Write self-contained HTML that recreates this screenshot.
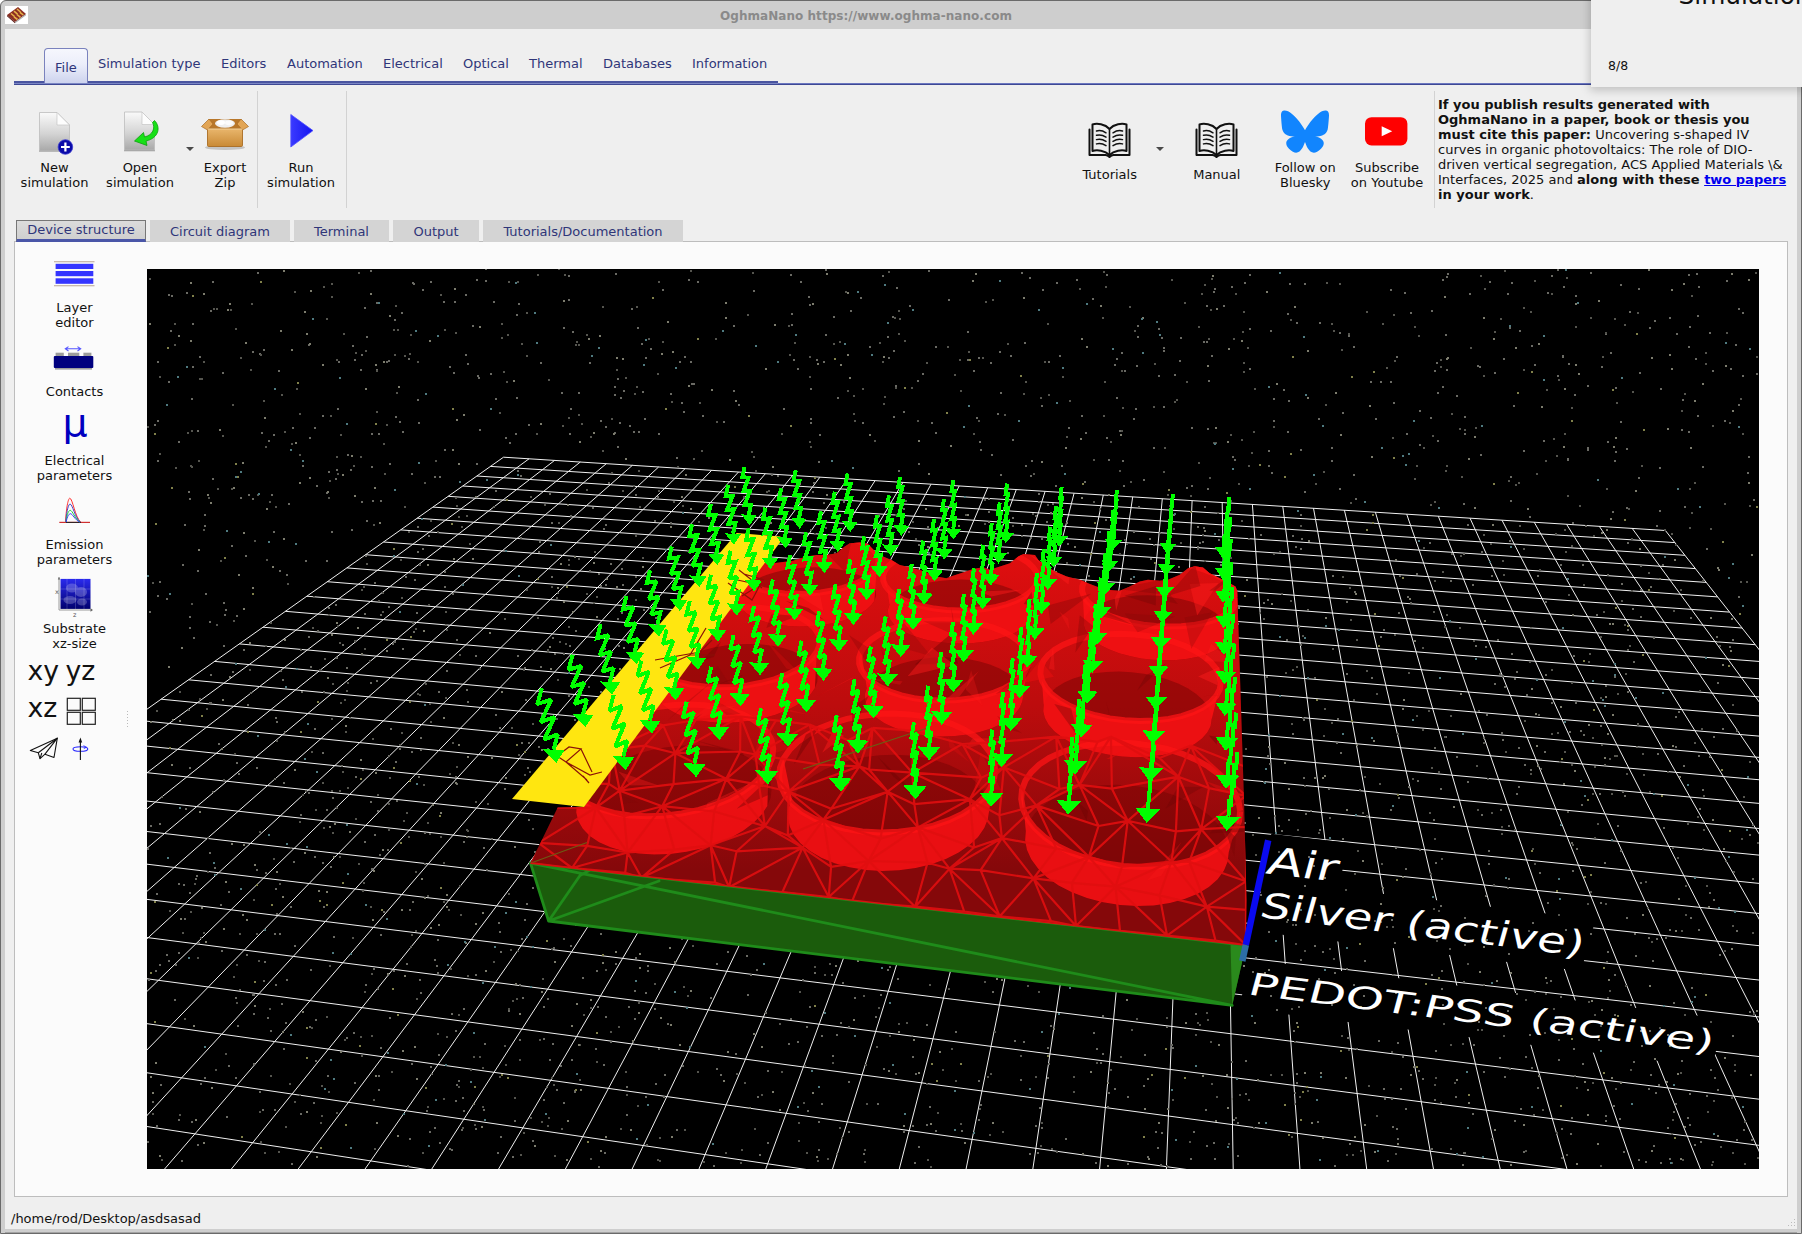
<!DOCTYPE html><html><head><meta charset="utf-8"><title>OghmaNano</title><style>
*{box-sizing:border-box;margin:0;padding:0}
html,body{width:1802px;height:1234px;overflow:hidden;background:#fff}
body{font-family:"DejaVu Sans","Liberation Sans",sans-serif;font-size:13px;color:#111;position:relative}
.abs{position:absolute}
#win{position:absolute;left:0;top:0;width:1802px;height:1234px;background:#cecece;border:1px solid #6a6a6a;border-radius:6px 6px 0 0}
#content{position:absolute;left:5px;top:29px;width:1792px;height:1200px;background:#efefef}
#title{position:absolute;left:0;top:2px;width:1732px;height:28px;line-height:28px;text-align:center;font-weight:bold;font-size:12px;color:#8a8a8a;letter-spacing:.05px}
.t{position:absolute;white-space:nowrap;line-height:15px}
.c{position:absolute;white-space:nowrap;line-height:15px;text-align:center;transform:translateX(-50%)}
.rt{position:absolute;top:56px;color:#2f3679;white-space:nowrap;line-height:15px}
.tab2{position:absolute;top:220px;height:22px;background:#d4d4d4;color:#2f3679;text-align:center;line-height:23px;white-space:nowrap}
.sep{position:absolute;width:1px;background:#d2d2d2}
</style></head><body>
<div id="win"></div>
<div id="content"></div>
<div id="title">OghmaNano https://www.oghma-nano.com</div>
<svg class="abs" style="left:5px;top:6px" width="23" height="18" viewBox="0 0 23 18"><rect width="23" height="18" fill="#fff"/><polygon points="2,9 13,1 21,8 10,16" fill="#8c2f22"/><polygon points="2,9 10,16 10,17.2 2,10.2" fill="#5a1a14"/><polygon points="10,16 21,8 21,9.2 10,17.2" fill="#a8a8a8"/><g stroke="#e7b24a" stroke-width="1.6"><path d="M6,7.5 9.5,10.5M9,5.2 12.5,8.2M12,3 15.5,6M9,10.8 12.5,13.5M12,8.5 15.5,11.3M15,6.3 18.3,9"/></g></svg>
<div class="abs" style="left:14px;top:81px;width:764px;height:2px;background:#4a55a0"></div>
<div class="abs" style="left:14px;top:83px;width:764px;height:1px;background:#7a86c4"></div>
<div class="abs" style="left:778px;top:83px;width:1019px;height:1px;background:#6b77c0"></div>
<div class="abs" style="left:14px;top:84px;width:1783px;height:1px;background:#3e4894"></div>
<div class="abs" style="left:5px;top:1232px;width:1792px;height:1px;background:#a3a3a3"></div>
<div class="abs" style="left:44px;top:48px;width:44px;height:35px;border:1px solid #7a82bd;border-bottom:none;border-radius:4px 4px 0 0;background:linear-gradient(#f6f7fd 0%,#eceefa 45%,#cdd3ee 100%)"></div>
<div class="rt" style="left:55px;top:60px">File</div>
<div class="rt" style="left:98px">Simulation type</div>
<div class="rt" style="left:221px">Editors</div>
<div class="rt" style="left:287px">Automation</div>
<div class="rt" style="left:383px">Electrical</div>
<div class="rt" style="left:463px">Optical</div>
<div class="rt" style="left:529px">Thermal</div>
<div class="rt" style="left:603px">Databases</div>
<div class="rt" style="left:692px">Information</div>
<div class="sep" style="left:257px;top:91px;height:117px"></div>
<div class="sep" style="left:346px;top:91px;height:117px"></div>
<div class="sep" style="left:1434px;top:91px;height:117px"></div>
<div class="c" style="left:54.5px;top:160px">New<br>simulation</div>
<div class="c" style="left:140px;top:160px">Open<br>simulation</div>
<div class="c" style="left:225px;top:160px">Export<br>Zip</div>
<div class="c" style="left:301px;top:160px">Run<br>simulation</div>
<div class="c" style="left:1109.7px;top:167px">Tutorials</div>
<div class="c" style="left:1216.8px;top:167px">Manual</div>
<div class="c" style="left:1305.2px;top:160px">Follow on<br>Bluesky</div>
<div class="c" style="left:1387px;top:160px">Subscribe<br>on Youtube</div>
<svg class="abs" style="left:36px;top:108px" width="40" height="48" viewBox="0 0 40 48"><defs><linearGradient id="dg" x1="0" y1="0" x2="0" y2="1"><stop offset="0" stop-color="#fafafa"/><stop offset=".55" stop-color="#d4d4d4"/><stop offset="1" stop-color="#a9a9a9"/></linearGradient></defs><path d="M3.5,4.5 H21 L33.5,17 V42.5 H3.5Z" fill="url(#dg)" stroke="#bdbdbd" stroke-width=".8"/><path d="M3,43.2H34" stroke="#8d8d8d" stroke-width="1.2" opacity=".7"/><path d="M21,4.5 V17 H33.5Z" fill="#fdfdfd" stroke="#c4c4c4" stroke-width=".7"/><circle cx="29.4" cy="39" r="7.3" fill="#0a0aa8"/><circle cx="29.4" cy="39" r="7.3" fill="none" stroke="#3b3bd0" stroke-width=".8"/><path d="M25,39H33.8M29.4,34.6V43.4" stroke="#fff" stroke-width="2.2"/></svg>
<svg class="abs" style="left:121px;top:108px" width="42" height="48" viewBox="0 0 42 48"><defs><linearGradient id="dg2" x1="0" y1="0" x2="0" y2="1"><stop offset="0" stop-color="#fafafa"/><stop offset=".55" stop-color="#d4d4d4"/><stop offset="1" stop-color="#a9a9a9"/></linearGradient></defs><path d="M3.5,4 H21 L33.5,16.5 V42 H3.5Z" fill="url(#dg2)" stroke="#bdbdbd" stroke-width=".8"/><path d="M3,42.7H34" stroke="#8d8d8d" stroke-width="1.2" opacity=".7"/><path d="M21,4 V16.5 H33.5Z" fill="#fdfdfd" stroke="#c4c4c4" stroke-width=".7"/><path d="M33.5,12.5 C40,19 38,30 25,33 L26,37.5 L13.5,33 L22.5,24.5 L23.5,29 C32,27 34.5,20 31.5,14.5Z" fill="#17e017" stroke="#0aa00a" stroke-width=".8" stroke-linejoin="round"/></svg>
<svg class="abs" style="left:185px;top:146px" width="10" height="6"><polygon points="1,1 9,1 5,5" fill="#4a4a4a"/></svg>
<svg class="abs" style="left:199px;top:114px" width="52" height="38" viewBox="0 0 52 38"><defs><linearGradient id="bx" x1="0" y1="0" x2="0" y2="1"><stop offset="0" stop-color="#e9b66d"/><stop offset="1" stop-color="#c98a35"/></linearGradient></defs><ellipse cx="26" cy="33.5" rx="20" ry="2.6" fill="#000" opacity=".18"/><path d="M10,5 H42 L46,14 H6Z" fill="#b8772a"/><ellipse cx="26" cy="9.5" rx="10" ry="4.2" fill="#efefef"/><ellipse cx="22" cy="8.6" rx="4" ry="2.4" fill="#fff"/><ellipse cx="30" cy="8.8" rx="4" ry="2.4" fill="#fbfbfb"/><path d="M10,5 L2.5,12.5 L8.5,16 L14,10Z" fill="#e2a555" stroke="#a96c22" stroke-width=".7"/><path d="M42,5 L49.5,12.5 L43.5,16 L38,10Z" fill="#e2a555" stroke="#a96c22" stroke-width=".7"/><rect x="8.5" y="14.5" width="35" height="18" rx="1.2" fill="url(#bx)" stroke="#a96c22" stroke-width=".9"/><path d="M8.5,15 H43.5" stroke="#f3cf95" stroke-width="1.2"/></svg>
<svg class="abs" style="left:288px;top:112px" width="28" height="38" viewBox="0 0 28 38"><defs><linearGradient id="rn" x1="0" y1="0" x2="1" y2="0"><stop offset="0" stop-color="#3a3aff"/><stop offset="1" stop-color="#1414f0"/></linearGradient></defs><polygon points="2.8,2.5 25,18.6 2.8,35" fill="url(#rn)" stroke="#5050ff" stroke-width=".8"/></svg>
<svg class="abs" style="left:1086px;top:120px" width="47" height="39" viewBox="0 0 47 39"><g fill="none" stroke="#111" stroke-linejoin="round" stroke-linecap="round"><path d="M23.5,9 C19,4 11,3 6.5,4.5 V31 C11,29.5 19,30.5 23.5,35 C28,30.5 36,29.5 40.500,31 V4.5 C36,3 28,4 23.500,9Z" stroke-width="2"/><path d="M23.5,9V35" stroke-width="1.6"/><path d="M3.5,9.500V35H19.500 C21.500,35 22.500,36 23.500,37 C24.500,36 25.500,35 27.500,35 H43.500 V9.500" stroke-width="2"/><g stroke-width="1.5"><path d="M10.500,11 C14,10 17,10.800 20,12.800M10.500,15.300 C14,14.300 17,15.100 20,17.100M10.500,19.600 C14,18.600 17,19.400 20,21.400M10.500,23.900 C14,22.900 17,23.700 20,25.700"/><path d="M36.500,11 C33,10 30,10.800 27,12.800M36.500,15.300 C33,14.300 30,15.100 27,17.100M36.500,19.600 C33,18.600 30,19.400 27,21.400M36.500,23.900 C33,22.900 30,23.700 27,25.700"/></g></g></svg>
<svg class="abs" style="left:1193px;top:120px" width="47" height="39" viewBox="0 0 47 39"><g fill="none" stroke="#111" stroke-linejoin="round" stroke-linecap="round"><path d="M23.5,9 C19,4 11,3 6.5,4.5 V31 C11,29.5 19,30.5 23.5,35 C28,30.5 36,29.5 40.500,31 V4.5 C36,3 28,4 23.500,9Z" stroke-width="2"/><path d="M23.5,9V35" stroke-width="1.6"/><path d="M3.5,9.500V35H19.500 C21.500,35 22.500,36 23.500,37 C24.500,36 25.500,35 27.500,35 H43.500 V9.500" stroke-width="2"/><g stroke-width="1.5"><path d="M10.500,11 C14,10 17,10.800 20,12.800M10.500,15.300 C14,14.300 17,15.100 20,17.100M10.500,19.600 C14,18.600 17,19.400 20,21.400M10.500,23.900 C14,22.900 17,23.700 20,25.700"/><path d="M36.500,11 C33,10 30,10.800 27,12.800M36.500,15.300 C33,14.300 30,15.100 27,17.100M36.500,19.600 C33,18.600 30,19.400 27,21.400M36.500,23.900 C33,22.900 30,23.700 27,25.700"/></g></g></svg>
<svg class="abs" style="left:1155px;top:146px" width="10" height="6"><polygon points="1,1 9,1 5,5" fill="#4a4a4a"/></svg>
<svg class="abs" style="left:1281px;top:108px" width="48" height="47" viewBox="0 -1.3 24 23.6" preserveAspectRatio="none"><path fill="#1185fe" d="M5.202 1.428C7.954 3.494 10.913 7.682 12 9.930c1.087-2.247 4.046-6.436 6.798-8.502C20.783-.062 24-1.215 24 2.453c0 .732-.42 6.153-.666 7.033-.856 3.060-3.978 3.840-6.755 3.368 4.854.826 6.089 3.562 3.422 6.299-5.065 5.196-7.280-1.304-7.847-2.970-.104-.305-.152-.448-.154-.327-.002-.121-.05.022-.154.327-.567 1.666-2.782 8.166-7.847 2.970-2.667-2.737-1.432-5.473 3.422-6.299-2.777.472-5.899-.308-6.755-3.368C.42 8.606 0 3.185 0 2.453 0-1.215 3.217-.062 5.202 1.428z"/></svg>
<svg class="abs" style="left:1364px;top:116px" width="45" height="31" viewBox="0 0 45 31"><rect x="1" y="1.200" width="42.400" height="28.200" rx="6.500" fill="#ff0000"/><polygon points="17.700,10.200 28.200,15.200 17.700,20.200" fill="#fff"/></svg>
<div class="t" style="left:1438px;top:97px;color:#111"><b>If you publish results generated with<br>OghmaNano in a paper, book or thesis you<br>must cite this paper:</b> Uncovering s-shaped IV<br>curves in organic photovoltaics: The role of DIO-<br>driven vertical segregation, ACS Applied Materials \&amp;<br>Interfaces, 2025 and <b>along with these <span style="color:#0000ee;text-decoration:underline">two papers</span><br>in your work</b>.</div>
<div class="abs" style="left:14px;top:241px;width:1774px;height:956px;background:#fbfbfb;border:1px solid #bdbdbd"></div>
<div class="tab2" style="left:16px;width:130px;border:1px solid #777;border-bottom:3px solid #4a56a8;background:linear-gradient(#dcdcdc,#cfcfcf);line-height:17px;height:22px">Device structure</div>
<div class="tab2" style="left:150px;width:140px">Circuit diagram</div>
<div class="tab2" style="left:294px;width:95px">Terminal</div>
<div class="tab2" style="left:393px;width:86px">Output</div>
<div class="tab2" style="left:483px;width:200px">Tutorials/Documentation</div>
<div class="c" style="left:74.5px;top:300px">Layer<br>editor</div>
<div class="c" style="left:74.5px;top:384px">Contacts</div>
<div class="c" style="left:74.5px;top:453px">Electrical<br>parameters</div>
<div class="c" style="left:74.5px;top:537px">Emission<br>parameters</div>
<div class="c" style="left:74.5px;top:621px">Substrate<br>xz-size</div>
<svg class="abs" style="left:50px;top:258px" width="50" height="30" viewBox="50 258 50 30"><path d="M54,261.700H94.500M54,285.700H94.500" stroke="#b9a594" stroke-width="1.100"/><g fill="#3535ff"><rect x="55.600" y="263.800" width="37.700" height="5.200"/><rect x="55.600" y="271" width="37.700" height="5.200"/><rect x="55.600" y="278.300" width="37.700" height="5.500"/></g></svg>
<svg class="abs" style="left:50px;top:342px" width="50" height="30" viewBox="50 342 50 30"><g fill="#9c9c9c"><rect x="55.600" y="352.700" width="8.200" height="3.600"/><rect x="68" y="352.700" width="11.300" height="3.600"/><rect x="83.400" y="352.700" width="8" height="3.600"/><rect x="55" y="367.500" width="37" height="2.100"/></g><rect x="53.800" y="356.100" width="39.500" height="11.800" rx="1" fill="#00007f"/><g stroke="#5555ff" stroke-width="1.100" fill="none"><path d="M66,348.800H80M68.500,346.600 65.300,348.800 68.500,351M77.500,346.600 80.700,348.800 77.500,351"/></g></svg>
<div class="abs" style="left:62.500px;top:398px;font-size:39.500px;line-height:48px;color:#0000c0">μ</div>
<svg class="abs" style="left:55px;top:494px" width="40" height="32" viewBox="55 494 40 32"><g fill="none" stroke-width="1"><path d="M59.300,522.400H90" stroke="#d03030" stroke-width="1.200"/><path d="M66,522.400H81" stroke="#222" stroke-width="1"/><path d="M65.500,522 C66.500,505 68.500,498.200 69.800,498.200 C72.500,498.200 75,517 80.600,522" stroke="#ff3030"/><path d="M65.800,522 C66.800,509 68.800,504 70,504 C72.500,504 75,518 80.300,522" stroke="#4545c8"/><path d="M66,522 C67,513 69,510.300 70.200,510.300 C72.500,510.300 75,519 80,522" stroke="#20d040"/><path d="M66.200,522 C67.200,516 69.200,513.700 70.400,513.700 C72.500,513.700 75,520 79.700,522" stroke="#3a3aff"/></g></svg>
<svg class="abs" style="left:52px;top:574px" width="44" height="46" viewBox="52 574 44 46"><defs><linearGradient id="sb" x1="0" y1="0" x2="0" y2="1"><stop offset="0" stop-color="#2a2aee"/><stop offset="1" stop-color="#00006e"/></linearGradient></defs><rect x="60.500" y="578.900" width="30" height="30" fill="url(#sb)"/><g fill="#fff" opacity=".22"><ellipse cx="72" cy="588" rx="6" ry="4.500"/><ellipse cx="81" cy="592" rx="6" ry="5"/><ellipse cx="70" cy="600" rx="6.500" ry="4"/><ellipse cx="82" cy="602" rx="5" ry="3.500"/></g><path d="M67,579V609M75.500,579V609M84,579V609M60.500,589H90.500M60.500,599H90.500" stroke="#fff" stroke-width=".5" opacity=".35"/><path d="M59,577V610H92" stroke="#9a9a9a" stroke-width="1" fill="none"/><path d="M90.500,608.300 93,610 90.500,611.700Z M57.800,579.500 59,577 60.200,579.500Z" fill="#666"/><text x="55" y="594" font-size="6.500" fill="#555" font-family="DejaVu Sans,sans-serif">x</text><text x="73" y="616.500" font-size="6.500" fill="#555" font-family="DejaVu Sans,sans-serif">z</text></svg>
<div class="t" style="left:27.500px;top:655px;font-size:26.700px;line-height:32px;color:#111">xy</div>
<div class="t" style="left:65.500px;top:655px;font-size:26.700px;line-height:32px;color:#111">yz</div>
<div class="t" style="left:27.500px;top:691.500px;font-size:26.700px;line-height:32px;color:#111">xz</div>
<svg class="abs" style="left:66px;top:697px" width="31" height="29" viewBox="66 697 31 29"><g fill="none" stroke="#222" stroke-width="1.200"><rect x="67.300" y="698.300" width="13" height="12"/><rect x="82.300" y="698.300" width="13" height="12"/><rect x="67.300" y="712.300" width="13" height="12"/><rect x="82.300" y="712.300" width="13" height="12"/></g></svg>
<svg class="abs" style="left:28px;top:735px" width="32" height="27" viewBox="28 735 32 27"><g fill="none" stroke="#111" stroke-width="1.100" stroke-linejoin="round"><path d="M30.300,750.500 57.300,738.200 54,757.500 45,754.200 40,758.600 38.300,752.800Z"/><path d="M38.300,752.800 57.300,738.200 45,754.200M40,758.600 41.800,753"/></g></svg>
<svg class="abs" style="left:70px;top:735px" width="22" height="27" viewBox="70 735 22 27"><ellipse cx="80.400" cy="749" rx="7.400" ry="2.300" fill="none" stroke="#2a2aff" stroke-width="1.100"/><path d="M80.400,760V739.500" stroke="#111" stroke-width="1.100"/><path d="M78.600,742.500 80.400,737.600 82.200,742.500Z" fill="#111"/><path d="M83.500,745.700 86.500,747.200 83.800,748.600" fill="none" stroke="#2a2aff" stroke-width=".9"/></svg>
<div class="abs" style="left:127px;top:711px;width:1px;height:16px;background:repeating-linear-gradient(#bbb 0 1px,transparent 1px 3px)"></div>
<svg class="abs" style="left:147px;top:269px" width="1612" height="900" viewBox="147 269 1612 900">
<rect x="147" y="269" width="1612" height="900" fill="#000"/>
<path d="M503.5,457.2L-1351.9,1768.6M529,458.8L-1280.7,1789.7M554.6,460.4L-1207.8,1811.2M580.3,462L-1133.2,1833.3M606.3,463.7L-1056.8,1855.9M632.4,465.3L-978.5,1879.1M658.6,467L-898.4,1902.8M685.1,468.6L-816.2,1927.1M711.7,470.3L-731.9,1952M738.5,472L-645.5,1977.6M765.4,473.7L-556.8,2003.8M792.6,475.4L-465.9,2030.8M819.9,477.2L-372.5,2058.4M847.4,478.9L-276.5,2086.8M875.1,480.6L-178,2115.9M902.9,482.4L-76.7,2145.9M931,484.2L27.4,2176.7M959.2,485.9L134.5,2208.4M987.7,487.7L244.7,2241M1016.3,489.5L358.1,2274.5M1045.1,491.4L474.9,2309.1M1074.1,493.2L595.2,2344.7M1103.3,495L719.2,2381.4M1132.7,496.9L847.1,2419.2M1162.3,498.8L979,2458.3M1192.1,500.6L1115.2,2498.5M1222.2,502.5L1255.8,2540.1M1252.4,504.4L1401.1,2583.1M1282.8,506.4L1551.3,2627.6M1313.5,508.3L1706.6,2673.5M1344.4,510.2L1867.4,2721.1M1375.4,512.2L2034,2770.4M1406.7,514.2L2206.5,2821.4M1438.3,516.2L2385.4,2874.4M1470,518.2L2571.1,2929.3M1502,520.2L2763.9,2986.4M1534.2,522.2L2964.2,3045.6M1566.6,524.3L3172.5,3107.2M1599.3,526.3L3389.2,3171.4M1632.2,528.4L3615,3238.2M1665.4,530.5L3850.3,3307.8M503.5,457.2L1665.4,530.5M490.5,466.4L1674.9,542.6M476.9,476L1684.9,555.3M462.8,486L1695.3,568.6M448.2,496.3L1706.2,582.4M433,507.1L1717.6,596.9M417.2,518.2L1729.5,612.1M400.7,529.9L1742.1,628M383.5,542L1755.2,644.7M365.6,554.7L1769,662.2M346.9,567.9L1783.5,680.7M327.3,581.7L1798.8,700.1M306.9,596.2L1815,720.6M285.4,611.3L1832,742.3M263,627.2L1850.1,765.3M239.4,643.9L1869.2,789.6M214.6,661.4L1889.5,815.4M188.6,679.8L1911.2,842.9M161.1,699.2L1934.2,872.2M132.1,719.7L1958.8,903.5M101.5,741.4L1985.2,937M69.1,764.3L2013.5,973M34.7,788.6L2044,1011.7M-1.8,814.4L2076.8,1053.5M-40.6,841.8L2112.4,1098.7M-82,871L2151,1147.8M-126.2,902.3L2193.1,1201.3M-173.5,935.7L2239.2,1259.9M-224.3,971.6L2289.8,1324.2M-279,1010.3L2345.6,1395.2M-338,1052L2407.6,1473.9M-401.8,1097.1L2476.7,1561.8M-471.1,1146.1L2554.3,1660.4M-546.6,1199.5L2642.1,1772M-629.3,1257.9L2742.2,1899.2M-720,1322L2857.3,2045.6M-820.2,1392.8L2991.2,2215.8M-931.3,1471.4L3148.9,2416.2M-1055.3,1559L3337.2,2655.6M-1194.5,1657.4L3566.1,2946.5M-1351.9,1768.6L3850.3,3307.8" stroke="#f0f0f0" stroke-width="1" fill="none"/>
<polygon points="1271.3,833.7 1349.8,842.9 1335.3,896.5 1256.8,887.3" fill="#000"/>
<polygon points="1264.5,879.5 1595.5,919.5 1581.1,970.9 1250.1,930.8" fill="#000"/>
<polygon points="1251.6,959.8 1724.6,1019 1711.5,1067.4 1238.5,1008.3" fill="#000"/>
<path d="M810,423h2M1186,488h2M1035,697h2M248,495h2M531,650h2M887,575h2M314,857h2M1160,1165h2M484,1044h2M1148,700h2M1158,329h2M1163,351h2M969,831h2M619,423h2M520,538h2M1395,848h2M967,332h2M574,720h2M843,884h2M147,849h2M291,1164h2M858,885h2M322,416h2M848,1027h2M567,809h2M1699,809h2M1463,1153h2M681,799h2M822,920h2M1700,1142h2M875,1017h2M204,1078h2M893,351h2M611,750h2M1396,1129h2M495,399h2M1634,934h2M204,526h2M1219,791h2M1048,1064h2M364,842h2M538,552h2M276,722h2M1000,393h2M1024,343h2M767,1071h2M1464,945h2M962,767h2M1514,1121h2M877,595h2M896,288h2M378,1076h2M361,355h2M228,1066h2M816,360h2M1076,280h2M695,905h2M1226,995h2M371,434h2M1523,451h2M184,525h2M617,619h2M412,283h2M724,882h2M1267,600h2M780,492h2M149,612h2M157,362h2M232,672h2M770,913h2M1752,879h2M1464,417h2M1463,504h2M1149,539h2M663,1097h2M735,1054h2M1442,927h2M1375,419h2M1419,850h2M1530,770h2M1102,1054h2M1271,473h2M322,753h2M1067,544h2M1440,789h2M377,989h2M197,431h2M765,1013h2M851,654h2M825,270h2M547,999h2M1662,565h2M280,671h2M1353,347h2M1023,1042h2M245,556h2M1040,792h2M1281,831h2M1273,399h2M996,620h2M1516,672h2M1464,434h2M1268,466h2M800,513h2M918,545h2M274,779h2M589,363h2M191,399h2M605,427h2M1713,737h2M1738,309h2M409,910h2M376,370h2M1221,865h2M1120,807h2M1590,934h2M889,967h2M160,1085h2M1180,338h2M446,671h2M195,879h2M253,995h2M790,1019h2M309,438h2M1675,747h2M1507,1011h2M370,271h2M571,658h2M1061,466h2M1657,754h2M1717,683h2M218,744h2M273,532h2M275,889h2M1410,313h2M1614,975h2M711,573h2M1445,335h2M1100,1063h2M418,777h2M818,1150h2M308,793h2M1688,432h2M279,934h2M1278,826h2M689,908h2M1600,726h2M1743,1130h2M719,849h2M667,1024h2M1046,522h2M629,426h2M1331,461h2M1186,807h2M222,373h2M623,391h2M1600,903h2M223,646h2M563,1103h2M526,904h2M1269,764h2M354,1083h2M333,937h2M727,952h2M1717,1090h2M467,702h2M413,284h2M445,625h2M551,577h2M236,763h2M1391,920h2M1304,492h2M1207,429h2M399,422h2M810,389h2M778,865h2M944,943h2M1178,717h2M366,337h2M1028,643h2M315,1020h2M1622,792h2M1483,1072h2M371,467h2M1397,1043h2M810,897h2M1081,416h2M1408,787h2M909,306h2M716,964h2M1557,376h2M1658,1085h2M1052,504h2M1669,318h2M1203,528h2M600,421h2M892,317h2M192,324h2M873,580h2M878,815h2M1119,431h2M645,993h2M1509,1069h2M688,280h2M485,269h2M633,432h2M1742,376h2M438,692h2M504,789h2M761,909h2M1249,275h2M1570,1134h2M1218,540h2M178,442h2M540,667h2M1233,983h2M443,302h2M210,311h2M1464,918h2M285,1023h2M1356,1049h2M1240,949h2M366,521h2M376,303h2M1690,918h2M1124,371h2M1698,930h2M189,628h2M1730,369h2M495,715h2M257,273h2M1296,1074h2M815,633h2M955,1032h2M1469,294h2M1263,782h2M1558,1060h2M620,398h2M1463,982h2M539,542h2M463,1009h2M654,1009h2M1216,625h2M818,462h2M1639,373h2M1494,373h2M365,556h2M942,744h2M615,964h2M521,939h2M364,308h2M556,800h2M875,921h2M868,863h2M949,742h2M411,1064h2M1298,1007h2M1751,1140h2M1019,964h2M722,635h2M1497,640h2M767,1143h2M1233,1120h2M659,891h2M439,1143h2M1736,731h2M583,812h2M1283,390h2M626,1115h2M1156,839h2M651,779h2M475,1129h2M1531,346h2M189,893h2M1697,416h2M739,568h2M1158,682h2M388,607h2M1607,575h2M963,576h2M1260,895h2M316,486h2M1489,282h2M431,1074h2M525,700h2M175,965h2M1021,273h2M411,752h2M1620,851h2M1649,1031h2M1641,1046h2M170,331h2M310,667h2M1640,883h2M1143,892h2M1109,962h2M1307,610h2M178,1120h2M651,654h2M1557,270h2M695,701h2M1710,1070h2M1318,419h2M1626,508h2M264,962h2M1347,1038h2M1245,1094h2M1353,475h2M540,363h2M1582,565h2M1206,1146h2M238,774h2M314,428h2M209,622h2M1390,290h2M682,1066h2M1393,403h2M224,615h2M517,656h2M331,532h2M624,925h2M1518,787h2M1065,1139h2M628,1007h2M1137,326h2M797,1042h2M908,532h2M914,761h2M546,1087h2M911,1036h2M935,1131h2M807,1111h2M383,912h2M465,295h2M680,771h2M1081,763h2M733,391h2M346,668h2M845,792h2M1225,562h2M429,1132h2M549,884h2M1706,549h2M1434,1100h2M777,476h2M858,612h2M1709,757h2M1509,541h2M1203,342h2M422,290h2M490,374h2M1659,468h2M1615,452h2M1172,1048h2M1093,1033h2M184,919h2M1223,306h2M253,1064h2M1296,323h2M1442,280h2M1234,460h2M189,499h2M1076,917h2M220,905h2M396,801h2M631,309h2M1199,543h2M1663,828h2M600,934h2M1270,996h2M1107,1107h2M643,610h2M1196,828h2M1346,674h2M1153,545h2M589,571h2M1387,1161h2M370,802h2M434,960h2M1397,1139h2M1441,989h2M1273,868h2M961,854h2M1390,382h2M1627,630h2M934,932h2M926,723h2M1039,858h2M1392,1127h2M168,295h2M1303,778h2M1245,1061h2M944,744h2M1364,961h2M168,961h2M1675,1104h2M889,594h2M300,1114h2M750,975h2M991,455h2M1304,886h2M961,1131h2M178,953h2M395,417h2M1702,790h2M352,346h2M274,934h2M1725,861h2M1612,512h2M493,302h2M1339,333h2M1068,907h2M657,497h2M1349,1144h2M1161,338h2M600,692h2M1604,765h2M645,358h2M880,657h2M866,836h2M538,747h2M632,715h2M1507,294h2M336,470h2M638,432h2M1435,863h2M1121,785h2M1074,960h2M1191,486h2M444,587h2M1736,1140h2M1171,1045h2M281,1004h2M610,564h2M1614,677h2M417,552h2M347,455h2M1606,962h2M228,892h2M552,1044h2M926,1025h2M647,966h2M722,808h2M1292,536h2M1260,535h2M268,441h2M990,363h2M783,409h2M634,991h2M420,993h2M1300,515h2M978,1120h2M1560,565h2M1143,480h2M722,580h2M378,434h2M1106,851h2M491,839h2M1683,766h2M1301,539h2M1752,825h2M1483,985h2M650,349h2M444,572h2M1543,441h2M1619,1119h2M1410,603h2M1472,1114h2M618,646h2M637,328h2M437,973h2M1047,759h2M1627,650h2M1194,704h2M294,946h2M275,718h2M508,1011h2M1300,960h2M547,749h2M1394,943h2M759,1155h2M1562,356h2M1303,720h2M380,501h2M1477,366h2M1624,796h2M337,409h2M243,650h2M1088,576h2M559,845h2M1638,1160h2M670,394h2M1383,630h2M1529,517h2M1337,719h2M189,768h2M676,458h2M926,1125h2M1706,1096h2M1056,283h2M1065,671h2M1398,798h2M821,809h2M1636,747h2M790,275h2M1137,610h2M1635,956h2M934,548h2M1446,370h2M436,966h2M978,611h2M837,956h2M645,1097h2M862,423h2M976,725h2M1348,336h2M1621,584h2M770,863h2M1429,543h2M188,492h2M350,470h2M157,461h2M1462,1165h2M808,297h2M1537,1088h2M1371,678h2M1095,1163h2M467,364h2M1736,931h2M1075,841h2M417,527h2M1732,640h2M677,889h2M943,740h2M1431,1149h2M662,290h2M1035,516h2M1463,554h2M426,1111h2M328,608h2M658,434h2M581,862h2M1653,638h2M1037,1153h2M756,970h2M346,1038h2M1545,675h2M214,868h2M1431,975h2M1638,289h2M1223,707h2M377,811h2M1163,348h2M605,1017h2M1587,450h2M549,789h2M1286,640h2M814,973h2M1076,826h2M1673,1003h2M931,423h2M1447,274h2M553,948h2M1418,1071h2M1079,860h2M1669,1159h2M1605,334h2M1533,1115h2M1123,853h2M635,958h2M1502,740h2M806,659h2M1585,526h2M1217,802h2M1503,359h2M159,965h2M927,527h2M265,873h2M1617,826h2M810,530h2M1157,1148h2M1391,1099h2M412,902h2M1604,863h2M1510,477h2M166,955h2M388,361h2M355,777h2M980,1105h2M1430,418h2M528,820h2M684,357h2M1007,966h2M771,475h2M1342,413h2M1640,590h2M809,305h2M1046,567h2M1637,724h2M563,328h2M1456,396h2M1529,1035h2M570,797h2M250,693h2M1551,703h2M263,981h2M817,658h2M1568,364h2M451,1014h2M226,1117h2M1220,807h2M1150,625h2M1695,359h2M1332,576h2M1491,576h2M757,1097h2M1292,734h2M869,347h2M1505,1020h2M1130,579h2M1244,823h2M1105,520h2M898,471h2M461,1130h2M210,703h2M1208,381h2M592,508h2M274,1110h2M327,1076h2M456,1085h2M434,477h2M596,971h2M1163,407h2M1539,873h2M1442,387h2M978,358h2M1020,1080h2M988,888h2M317,631h2M1101,903h2M642,392h2M1431,311h2M524,668h2M456,640h2M147,1142h2M1511,654h2M1441,971h2M1563,287h2M1135,409h2M702,416h2M1328,789h2M981,933h2M1532,923h2M715,600h2M273,435h2M256,870h2M1567,460h2M1044,681h2M679,639h2M693,384h2M983,921h2M791,314h2M1688,347h2M1231,1099h2M1437,393h2M1726,281h2M1576,849h2M1380,637h2M374,583h2M1667,1128h2M863,1154h2M738,405h2M283,783h2M1322,952h2M1032,682h2M418,423h2M710,998h2M706,891h2M605,585h2M308,637h2M1206,342h2M812,492h2M1435,1051h2M710,784h2M603,1065h2M276,914h2M330,867h2M259,1092h2M376,681h2M1702,467h2M549,1060h2M1620,285h2M568,696h2M793,632h2M237,1026h2M409,1139h2M575,631h2M1633,662h2M1041,406h2M1235,657h2M568,276h2M1047,1048h2M1630,1005h2M275,985h2M615,274h2M1673,1112h2M556,1090h2M994,538h2M1601,367h2M928,271h2M1293,1031h2M1084,482h2M1478,1022h2M1534,365h2M354,360h2M832,1056h2M308,345h2M585,801h2M1614,1015h2M664,1075h2M860,298h2M1683,1039h2M189,617h2M877,1104h2M848,1082h2M477,376h2M1085,433h2M174,1000h2M655,618h2M575,925h2M437,940h2M286,980h2M1244,283h2M1722,729h2M351,530h2M1090,619h2M568,300h2M1753,500h2M574,1091h2M516,315h2M1313,866h2M279,571h2M413,632h2M1626,449h2M1656,526h2M655,1084h2M595,1049h2M903,509h2M389,464h2M840,837h2M917,381h2M1031,806h2M794,486h2M797,369h2M1504,1077h2M1133,532h2M1553,1027h2M1507,888h2M893,417h2M806,1027h2M519,985h2M314,729h2M434,1128h2M282,680h2M485,281h2M1138,507h2M610,1042h2M980,450h2M1516,994h2M912,1057h2M428,536h2M424,864h2M1689,327h2M1012,440h2M1314,946h2M455,1031h2M1605,686h2M1039,1108h2M182,565h2M541,715h2M665,853h2M1582,1028h2M1544,752h2M1058,755h2M1717,642h2M602,924h2M691,384h2M1042,591h2M1133,978h2M1531,1068h2M763,933h2M1295,547h2M156,1126h2M1572,523h2M617,447h2M186,293h2M328,472h2M1127,1164h2M259,354h2M690,362h2M1294,1093h2M1114,365h2M620,906h2M430,282h2M1339,489h2M1445,737h2M599,794h2M681,403h2M793,360h2M812,795h2M1092,299h2M1214,1159h2M1735,345h2M290,907h2M1137,337h2M1516,794h2M1451,554h2M1288,401h2M1547,903h2M1499,1058h2M1211,356h2M1654,321h2M1719,955h2M365,985h2M979,442h2M1596,615h2M386,362h2M1384,1099h2M1650,1075h2M543,771h2M1407,597h2M262,1110h2M621,857h2M223,603h2M896,577h2M869,672h2M372,501h2M253,1014h2M455,1101h2M1180,940h2M1041,1128h2M1520,1109h2M500,1137h2M1640,617h2M278,371h2M200,1084h2M1166,1027h2M1123,656h2M1660,1163h2M1510,501h2M889,824h2M1488,851h2M1383,1089h2M1000,475h2M1296,1083h2M571,786h2M463,842h2M209,703h2M625,699h2M1434,748h2M632,820h2M1205,1110h2M1363,996h2M1016,792h2M997,414h2M498,923h2M1059,356h2M1354,592h2M1112,799h2M1359,790h2M493,507h2M973,371h2M1017,612h2M1561,1129h2M1319,830h2M1416,574h2M155,971h2M1480,455h2M1049,776h2M1214,289h2M1456,757h2M1433,820h2M475,975h2M302,466h2M1655,1093h2M784,502h2M1041,539h2M1035,1126h2M937,701h2M1598,1040h2M405,577h2M261,433h2M1437,441h2M478,378h2M552,638h2M1036,602h2M665,725h2M505,438h2M458,1081h2M1656,939h2M449,1149h2M534,852h2M1504,687h2M1406,434h2M918,464h2M1405,1109h2M1334,973h2M1398,613h2M1697,316h2M1590,273h2M1738,405h2M713,1166h2M1475,646h2M716,1069h2M1473,1045h2M1464,1153h2M918,1147h2M199,357h2M1640,566h2M680,613h2M605,525h2M271,495h2M1055,486h2M1108,1093h2M270,1031h2M1300,645h2M819,435h2M342,645h2M725,607h2M1268,451h2M205,594h2M1550,981h2M1508,954h2M532,888h2M747,995h2M576,835h2M1689,1125h2M373,969h2M1607,952h2M247,705h2M514,1121h2M578,393h2M1575,296h2M1575,703h2M935,433h2M895,833h2M479,430h2M402,432h2M1308,857h2M630,701h2M1696,274h2M1124,872h2M517,471h2M315,1061h2M1014,1041h2M647,971h2M772,711h2M486,870h2M833,317h2M1192,683h2M1501,733h2M1502,676h2M736,642h2M465,355h2M1434,371h2M1540,769h2M1116,398h2M1137,716h2M1331,1005h2M378,1090h2M1627,543h2M1571,1118h2M1605,1116h2M1043,717h2M1029,1154h2M1615,388h2M154,425h2M1305,814h2M837,398h2M602,903h2M1206,756h2M1193,824h2M880,995h2M1648,938h2M1652,961h2M897,979h2M1270,331h2M527,768h2M235,998h2M522,998h2M649,608h2M914,790h2M949,668h2M380,1048h2M406,964h2M1614,461h2M621,569h2M999,640h2M614,387h2M1012,518h2M1048,362h2M582,978h2M338,362h2M859,797h2M1607,442h2M1228,774h2M598,1167h2M1300,549h2M903,1132h2M380,615h2M193,638h2M885,684h2M1649,328h2M1114,1089h2M1567,459h2M1467,782h2M1402,1057h2M1190,1159h2M1274,816h2M422,549h2M1317,1122h2M483,1110h2M1195,1014h2M1213,292h2M617,719h2M520,476h2M416,613h2M394,320h2M746,956h2M267,1018h2M549,494h2M419,980h2M240,498h2M1047,1078h2M878,679h2M1494,684h2M1485,1008h2M687,551h2M395,762h2M1582,1064h2M1523,1152h2M466,690h2M452,594h2M1035,666h2M181,1161h2M499,932h2M1648,1089h2M551,523h2M685,770h2M604,649h2M1627,692h2M604,1153h2M821,1036h2M608,483h2M788,1044h2M1481,815h2M786,696h2M1698,756h2M310,970h2M1029,278h2M1638,478h2M952,941h2M753,291h2M621,613h2M246,955h2M235,1078h2M286,575h2M1144,723h2M1038,502h2M1605,1121h2M371,869h2M1709,893h2M999,352h2M1709,333h2M370,683h2M1613,1106h2M915,641h2M1116,359h2M456,784h2M313,1103h2M1000,720h2M1318,979h2M1623,1152h2M1164,565h2M1042,290h2M1346,602h2M1162,617h2M1400,1089h2M1268,932h2M1289,284h2M1587,448h2M964,742h2M1479,367h2M965,796h2M883,1069h2M1087,755h2M509,443h2M1310,811h2M836,1154h2M738,578h2M1038,494h2M915,1074h2M614,681h2M196,876h2M1179,361h2M1094,541h2M476,464h2M543,1100h2M1545,602h2M225,610h2M1669,930h2M1702,849h2M1534,992h2M284,732h2M323,692h2M430,1067h2M988,512h2M166,599h2M1030,476h2M171,296h2M912,1126h2M922,863h2M932,912h2M1226,653h2M1180,881h2M1508,879h2M922,374h2M239,990h2M1511,283h2M1714,1078h2M634,1019h2M1405,869h2M936,623h2M185,809h2M1676,334h2M292,428h2M462,1098h2M818,1122h2M951,969h2M560,1066h2M159,582h2M515,434h2M1688,275h2M1514,679h2M210,675h2M407,1166h2M746,697h2M1660,389h2M813,724h2M390,729h2M1159,533h2M1419,411h2M600,586h2M895,667h2M994,946h2M1003,916h2M1019,606h2M570,946h2M472,326h2M500,952h2M336,658h2M887,337h2M401,313h2M1455,1097h2M831,662h2M800,282h2M1442,1005h2M598,574h2M1125,855h2M1573,656h2M792,778h2M148,980h2M192,367h2M449,367h2M1571,843h2M1495,1015h2M823,503h2M1472,585h2M1197,547h2M1021,525h2M1060,779h2M1629,312h2M1422,1079h2M1392,975h2M654,521h2M1581,805h2M1509,328h2M1122,461h2M850,311h2M451,1150h2M831,750h2M571,1060h2M1153,769h2M1732,1036h2M1712,371h2M453,373h2M887,970h2M755,909h2M1094,751h2M987,848h2M231,546h2M644,419h2M1645,1162h2M1153,448h2M1007,553h2M1207,489h2M335,605h2M614,395h2M518,304h2M574,1092h2M389,1018h2M1319,323h2M887,798h2M1021,536h2M809,1007h2M1162,728h2M392,644h2M1304,284h2M252,995h2M1099,958h2M640,728h2M1108,723h2M895,386h2M1713,900h2M1572,871h2M848,1132h2M497,1153h2M1202,542h2M1346,969h2M1749,1012h2M1632,609h2M1119,674h2M1467,525h2M570,409h2M1678,712h2M679,362h2M720,1075h2M1574,1076h2M379,855h2M483,848h2M1689,1094h2M1749,835h2M353,1033h2M810,557h2M1396,357h2M1742,313h2M1486,715h2M374,835h2M1106,438h2M1748,457h2M751,595h2M516,398h2M424,833h2M638,682h2M326,810h2M387,850h2M1249,369h2M679,593h2M1679,1048h2M402,649h2M236,616h2M1599,794h2M791,325h2M771,912h2M1288,820h2M252,499h2M1724,421h2M1127,1097h2M1143,1086h2M1500,810h2M1273,421h2M399,749h2M1314,678h2M301,692h2M854,998h2M635,495h2M733,326h2M732,679h2M1101,900h2M1147,1157h2M1380,382h2M821,1104h2M1174,375h2M300,815h2M1295,925h2M1698,287h2M197,571h2M1483,738h2M668,625h2M710,799h2M1046,620h2M1025,466h2M417,400h2M893,596h2M1030,538h2M617,379h2M1111,986h2M1158,376h2M528,743h2M1287,432h2M1659,511h2M439,477h2M825,335h2M388,756h2M1518,748h2M293,862h2M1031,461h2M1224,916h2M1694,1145h2M813,483h2M221,951h2M1675,717h2M1580,731h2M787,853h2M1236,748h2M844,626h2M697,282h2M393,971h2M1310,863h2M1446,277h2M1684,507h2M811,618h2M836,692h2M622,585h2M840,1023h2M935,347h2M212,479h2M1008,673h2M499,728h2M1190,746h2M897,934h2M159,824h2M929,1107h2M152,1102h2M646,1145h2M995,538h2M810,419h2M157,596h2M1255,958h2M1526,695h2M928,689h2M1232,457h2M570,516h2M326,493h2M1231,287h2M1378,1041h2M1729,647h2M992,992h2M1062,778h2M1237,1123h2M1232,615h2M420,738h2M723,422h2M157,421h2M569,646h2M824,663h2M831,975h2M1150,559h2M1180,646h2M1204,507h2M1125,646h2M455,777h2M1106,275h2M638,928h2M420,750h2M852,585h2M288,504h2M1068,428h2M528,425h2M1136,366h2M361,502h2M1213,632h2M1562,357h2M364,614h2M156,894h2M683,856h2M1206,306h2M309,1027h2M1266,677h2M1096,860h2M1340,753h2M1436,363h2M1237,1156h2M875,606h2M654,585h2M1440,906h2M1537,576h2M475,656h2M1756,374h2M1009,749h2M867,557h2M256,768h2M323,907h2M1267,756h2M658,1049h2M948,300h2M927,880h2M1417,781h2M183,885h2M882,276h2M519,1040h2M438,1055h2M1155,822h2M1089,846h2M614,433h2M283,1049h2M1450,581h2M341,766h2M1738,597h2M410,947h2M1530,628h2M1485,647h2M380,935h2M1665,938h2M603,529h2M1192,729h2M676,1130h2M1519,331h2M360,370h2M1096,1049h2M1565,930h2M1263,603h2M1488,864h2M572,332h2M512,1157h2M1747,473h2M1249,329h2M1331,448h2M1213,1143h2M543,1007h2M823,567h2M1342,839h2M1010,356h2M1133,419h2M1690,618h2M626,1087h2M521,743h2M1050,1026h2M911,587h2M1197,527h2M197,1145h2M914,1163h2M697,903h2M561,393h2M1481,552h2M263,350h2M563,654h2M212,792h2M1334,1166h2M557,822h2M1653,1146h2M1304,786h2M191,1122h2M1485,896h2M1121,353h2M978,1081h2M1336,743h2M1583,735h2M212,282h2M408,359h2M1355,499h2M1560,997h2M870,650h2M560,760h2M1108,460h2M1166,670h2M335,479h2M332,798h2M1370,382h2M1390,810h2M476,280h2M1626,918h2M411,474h2M1573,1049h2M543,1039h2M1574,395h2M1193,1132h2M495,491h2M597,1007h2M1404,293h2M888,358h2M733,788h2M683,412h2M1687,1118h2M1610,353h2M1681,1061h2M1191,428h2M1353,985h2M569,434h2M414,580h2M670,523h2M1252,972h2M810,856h2M1161,1133h2M842,983h2M305,561h2M454,302h2M1508,826h2M168,382h2M322,863h2M843,502h2M1300,450h2M640,755h2M1287,314h2M1513,406h2M1682,400h2M1194,885h2M1702,974h2M1525,1057h2M1057,557h2M524,920h2M204,515h2M768,780h2M178,884h2M463,1111h2M823,362h2M1155,1132h2M1399,576h2M394,642h2M1691,988h2M1524,765h2M1123,486h2M1419,445h2M689,553h2M584,737h2M1620,422h2M161,797h2M733,631h2M1650,587h2M802,980h2M1716,637h2M903,412h2M557,593h2M988,499h2M1551,276h2M748,539h2M976,418h2M252,352h2M1681,430h2M641,344h2M1276,1010h2M532,1141h2M326,561h2M150,826h2M836,1035h2M554,654h2M1587,386h2M1633,1062h2M1102,1016h2M1547,293h2M1569,732h2M940,732h2M209,853h2M769,948h2M1144,1055h2M967,360h2M444,450h2" stroke="#6a6a64" stroke-width="2" fill="none" shape-rendering="crispEdges"/>
<path d="M339,643h2M332,833h2M1438,911h2M273,859h2M419,565h2M1254,389h2M1294,1104h2M358,864h2M1605,333h2M1414,479h2M1066,563h2M296,389h2M789,617h2M1364,777h2M699,754h2M781,931h2M1542,1110h2M874,441h2M427,1107h2M1273,554h2M456,506h2M445,698h2M1411,939h2M1744,1164h2M1292,670h2M954,375h2M354,641h2M917,421h2M1101,760h2M1564,434h2M637,1106h2M611,473h2M677,467h2M565,763h2M320,1123h2M942,1070h2M1035,1077h2M1625,674h2M466,830h2M1681,411h2M814,534h2M871,738h2M1174,402h2M499,413h2M1632,392h2M814,967h2M347,788h2M1182,889h2M1565,552h2M1239,1095h2M654,984h2M561,1129h2M794,343h2M974,616h2M1086,720h2M934,608h2M978,421h2M1201,853h2M1556,456h2M1434,581h2M568,565h2M184,1019h2M535,795h2M1062,377h2M1478,711h2M1184,584h2M1594,1015h2M1664,530h2M260,355h2M927,1160h2M747,315h2M469,544h2M1119,554h2M558,523h2M330,416h2M1611,794h2M179,1115h2M232,405h2M1290,320h2M1429,813h2M1243,363h2M1481,1030h2M1134,331h2M1523,370h2M1204,561h2M578,345h2M437,1034h2M883,404h2M1166,1166h2M1153,966h2M839,1128h2M1502,561h2M988,730h2M1483,535h2M635,577h2M1172,1100h2M1701,729h2M504,619h2M1682,1160h2M994,1032h2M884,397h2M655,662h2M1116,870h2M1228,1144h2M1625,986h2M404,507h2M1450,716h2M149,279h2M191,467h2M1528,931h2M673,502h2M905,501h2M544,505h2M370,907h2M530,497h2M912,608h2M312,628h2M326,319h2M547,650h2M625,378h2M1729,423h2M344,700h2M419,695h2M352,938h2M620,1129h2M1376,1116h2M300,650h2M511,728h2M1734,1065h2M159,377h2M817,687h2M1273,427h2M1571,546h2M878,693h2M564,275h2M332,684h2M959,360h2M906,1023h2M369,661h2M1605,904h2M601,904h2M548,1118h2M1523,308h2M1740,582h2M1099,509h2M514,1098h2M1052,785h2M230,310h2M1130,482h2M973,434h2M1074,837h2M916,646h2M1428,711h2M612,896h2M1342,577h2M565,644h2M343,334h2M1298,627h2M1331,723h2M1207,1020h2M1235,294h2M1392,927h2M1630,1070h2M311,1028h2M682,506h2M254,541h2M1538,715h2M1245,749h2M581,669h2M853,414h2M1685,915h2M800,613h2M1379,784h2M992,300h2M1590,318h2M342,772h2M524,775h2M1202,535h2M1579,506h2M767,538h2M406,813h2M1558,1040h2M216,625h2M1069,946h2M809,442h2M1648,573h2M548,380h2M1567,496h2M1442,572h2M437,532h2M1027,986h2M1681,931h2M1732,926h2M401,733h2M679,912h2M1607,998h2M659,1138h2M1079,289h2M985,799h2M1323,736h2M1616,756h2M1215,620h2M523,670h2M708,660h2M174,345h2M1008,912h2M1446,466h2M446,630h2M1703,830h2M1744,1122h2M1589,654h2M765,597h2M1024,907h2M321,1116h2M1339,284h2M576,342h2M1241,440h2M1270,1075h2M755,471h2M1103,416h2M1572,845h2M754,1129h2M885,920h2M339,791h2M1617,694h2M896,618h2M578,559h2M1012,526h2M703,1162h2M563,939h2M978,827h2M270,1076h2M448,910h2M1444,737h2M503,372h2M188,710h2M1331,324h2M1731,1098h2M1571,683h2M1120,1057h2M355,353h2M581,424h2M1434,839h2M827,1159h2M779,867h2M626,1095h2M1170,624h2M1252,835h2M935,739h2M275,507h2M1215,597h2M1302,636h2M364,649h2M1142,869h2M251,304h2M1592,738h2M278,1152h2M960,391h2M1600,1026h2M1354,874h2M1483,376h2M1534,281h2M516,999h2M692,697h2M1198,327h2M1515,485h2M559,642h2M594,552h2M1724,504h2M427,896h2M1564,1019h2M1624,325h2M331,284h2M222,436h2M804,1066h2M1643,775h2M328,498h2M1374,921h2M1217,513h2M399,745h2M396,393h2M427,823h2M611,419h2M803,1103h2M657,1160h2M1033,474h2M1423,548h2M772,624h2M393,330h2M1048,395h2M748,685h2M1077,893h2M1269,579h2M635,600h2M191,431h2M1494,332h2M1000,614h2M697,1072h2M358,273h2M1073,978h2M947,807h2M1416,716h2M1206,1013h2M616,370h2M1172,679h2M1009,767h2M1350,620h2M506,382h2M1189,699h2M1314,915h2M233,977h2M152,583h2M1323,472h2M1047,324h2M768,697h2M742,674h2M382,612h2M936,612h2M281,395h2M466,516h2M408,837h2M590,1008h2M1593,536h2M1241,521h2M1684,394h2M1602,357h2M198,943h2M783,913h2M668,714h2M1345,890h2M1433,909h2M258,961h2M1024,958h2M1740,399h2M482,1068h2M1594,767h2M1202,977h2M1459,628h2M388,830h2M493,962h2M1583,585h2M1148,713h2M882,362h2M1307,1091h2M590,775h2M1381,864h2M430,722h2M752,273h2M809,798h2M968,892h2M269,1009h2M1131,941h2M1332,649h2M999,637h2M1519,526h2M611,836h2M1255,855h2M422,1153h2M1551,670h2M539,845h2M1414,327h2M1710,1022h2M1197,1023h2M878,1008h2M542,979h2M740,1163h2M456,767h2M299,455h2M1467,964h2M1121,431h2M415,872h2M1393,315h2M683,634h2M1732,705h2M1189,1142h2M864,1162h2M1749,762h2M161,1160h2M1318,833h2M1341,350h2M285,1127h2M725,1153h2M263,401h2M1476,766h2M264,1153h2M240,358h2M832,1063h2M795,846h2M788,326h2M578,415h2M1013,621h2M1352,1155h2M1493,885h2M618,1027h2M1121,371h2M1434,502h2M331,297h2M397,330h2M1742,434h2M865,1065h2M1051,1149h2M201,379h2M269,502h2M1732,1153h2M423,785h2M1324,709h2M605,970h2M1443,1024h2M824,975h2M1011,594h2M1173,529h2M1614,319h2M1290,601h2M1053,831h2M1191,619h2M1224,541h2M1434,1085h2M684,1130h2M1624,625h2M1229,641h2M1023,394h2M894,634h2M741,725h2M1067,918h2M504,1046h2M1148,802h2M1422,648h2M558,269h2M1044,362h2M236,1003h2M898,311h2M751,686h2M924,671h2M199,379h2M1094,742h2M507,335h2M1153,407h2M557,680h2M1539,570h2M1689,489h2M259,1112h2M1603,612h2M259,832h2M1002,1132h2M1285,673h2M1040,1146h2M571,818h2M1097,941h2M846,474h2M1594,838h2M1397,734h2M294,1102h2M1167,495h2M474,1125h2M799,992h2M458,1087h2M743,497h2M829,964h2M337,474h2M767,881h2M829,627h2M1366,671h2M216,309h2M346,691h2M417,694h2M386,425h2M1243,312h2M1315,484h2M394,355h2M1734,1071h2M231,489h2M990,1074h2M1649,792h2M1129,307h2M1685,886h2M554,1156h2M895,1074h2M937,1113h2M1362,813h2M638,471h2M249,670h2M955,1081h2M762,769h2M373,1100h2M445,612h2M981,945h2M866,1104h2M954,584h2M479,669h2M650,734h2M1689,528h2M302,795h2M888,581h2M1216,1097h2M1487,779h2M1546,390h2M458,1015h2M1460,556h2M199,699h2M1600,637h2M1213,443h2M1119,471h2M1422,730h2M1697,817h2M1291,1137h2M344,1040h2M508,1009h2M1691,513h2M415,931h2M1588,662h2M1059,873h2M213,309h2M1104,382h2M824,812h2M1329,818h2M1180,543h2M984,500h2M1235,606h2M662,342h2M1325,405h2M1545,994h2M537,618h2M1204,285h2M551,1078h2M1294,1042h2M1248,539h2M1432,436h2M1300,526h2M190,466h2M1756,357h2M840,908h2M556,719h2M1346,920h2M1110,442h2M1525,1151h2M638,1003h2M1564,752h2M389,778h2M1659,1028h2M1102,318h2M596,1062h2M1286,922h2M1105,287h2M1230,435h2M809,377h2M207,838h2M322,783h2M1247,348h2M1501,827h2M1083,675h2M530,1118h2M1025,382h2M323,828h2M449,774h2M981,894h2M1051,530h2M340,435h2M658,282h2M789,704h2M898,334h2M256,934h2M1440,360h2M508,894h2M1553,439h2M203,362h2M299,414h2M1626,774h2M984,982h2M834,553h2M470,1070h2M1349,588h2M931,529h2M487,804h2M208,498h2M895,515h2M250,370h2M1114,717h2M372,739h2M1154,364h2M619,705h2M886,723h2M1190,496h2M589,845h2M1215,443h2M1124,540h2M299,1095h2M169,911h2M1201,294h2M220,561h2M1680,590h2M1667,772h2M541,1122h2M781,1072h2M147,427h2M675,890h2M1297,830h2M1073,1077h2M1007,344h2M761,1095h2M1592,794h2M1060,518h2M1233,869h2M1564,530h2M329,481h2M883,658h2M425,684h2M1470,348h2M1077,609h2M875,622h2M1461,477h2M279,884h2M1366,816h2M833,344h2M802,567h2M820,618h2M435,461h2M462,1128h2M1073,1092h2M1505,752h2M676,782h2M1457,1004h2M1588,1002h2M959,592h2M391,1072h2M1614,756h2M798,1141h2M908,816h2M1631,591h2M361,1056h2M482,1107h2M203,530h2M1545,461h2M1710,529h2M638,821h2M1671,1163h2M1110,1070h2M904,341h2M1093,924h2M1441,859h2M363,883h2M1208,339h2M1357,851h2M1616,403h2M336,457h2M898,1024h2M926,921h2M529,772h2M1171,280h2M182,933h2M1606,489h2M460,915h2M1555,534h2M371,1036h2M289,1084h2M1259,613h2M877,902h2M781,434h2M753,457h2M1753,1014h2M1189,914h2M815,873h2M467,831h2M668,665h2M191,604h2M1394,635h2M197,958h2M1232,906h2M215,1070h2M1326,283h2M194,884h2M1499,674h2M1757,843h2M1164,448h2M467,976h2M888,693h2M579,1080h2M1462,1044h2M1705,353h2M749,869h2M586,335h2M1020,1056h2M1546,983h2M443,1099h2M415,629h2M1184,303h2M217,489h2M1726,333h2M1483,743h2M475,802h2M1281,594h2M376,412h2M400,560h2M1445,471h2M1348,334h2M1201,788h2M353,466h2M1566,278h2M863,996h2M517,282h2M1529,662h2M1675,545h2M1022,907h2M904,530h2M1163,691h2M636,307h2M328,615h2M364,992h2M266,560h2M1518,483h2M1103,272h2M982,358h2M692,946h2M602,307h2M1556,1133h2M1299,1097h2M1551,294h2M257,495h2M417,362h2M926,363h2M1680,1073h2M1209,478h2M1192,841h2M1176,400h2M1004,709h2M526,313h2M741,569h2M583,1015h2M625,1072h2M985,302h2M844,614h2M841,1138h2M1046,564h2M501,324h2M703,719h2M1333,959h2M639,507h2M395,306h2M331,791h2M633,486h2M965,515h2M639,655h2M1211,1084h2M769,544h2M1609,759h2M174,324h2M1093,502h2M505,1065h2M156,711h2M741,1150h2M834,885h2M1491,813h2M428,605h2M551,949h2M499,1077h2M596,597h2M1530,312h2M501,338h2M1136,1019h2M1536,474h2M892,774h2M365,351h2M1557,733h2M1446,615h2M294,292h2M1501,834h2M929,985h2M1672,1120h2M1191,625h2M1712,426h2M429,834h2M1041,1123h2M536,434h2M1248,466h2M225,1054h2M355,819h2M1746,582h2M1464,430h2M461,527h2M1195,1035h2M979,1109h2M1500,319h2M1431,768h2M761,713h2M1621,601h2M1629,646h2M1408,673h2M388,804h2M556,598h2M1210,1042h2M562,426h2M459,886h2M634,394h2M767,869h2M545,887h2M983,581h2M376,371h2M709,922h2M382,593h2M912,522h2M1197,549h2M360,457h2M1477,810h2M949,669h2M547,652h2M732,681h2M523,1133h2M1600,698h2M190,912h2M1571,765h2M1433,612h2M1172,649h2M1059,729h2M371,974h2M424,483h2M1637,725h2M265,447h2M1131,1030h2M1438,772h2M260,1142h2M1150,983h2M1418,336h2M347,683h2M1166,1018h2M1645,882h2M152,1114h2M653,628h2M1706,886h2M826,583h2M206,709h2M1600,1166h2M610,1032h2M653,718h2M960,1124h2M768,823h2M519,1060h2M526,590h2M1532,849h2M662,888h2M458,517h2M1253,432h2M337,626h2M652,733h2M985,909h2M1235,639h2M1454,1083h2M1056,1152h2M621,783h2M1459,429h2M537,275h2M849,654h2M319,670h2M777,689h2M736,601h2M1733,872h2M667,924h2M179,692h2M1576,1088h2M336,360h2M996,649h2M1551,734h2M287,584h2M1341,1036h2M1430,874h2M223,780h2M1051,819h2M811,939h2M693,459h2M951,1049h2M1523,549h2M1561,1158h2M1169,506h2M1444,627h2M207,872h2M1752,933h2M1694,483h2M593,603h2M1450,1045h2M1647,908h2M568,560h2M551,587h2M1641,466h2M1703,796h2M553,1085h2M895,388h2M847,391h2M518,755h2M864,1150h2M1430,505h2M862,389h2M1440,367h2M768,491h2M1291,1009h2M360,1037h2M198,461h2M1534,864h2M315,810h2M1637,313h2M1045,878h2M1449,949h2M699,403h2M888,272h2M1575,327h2M1571,408h2M636,387h2M1473,641h2M1194,816h2M579,1045h2M1684,1015h2M440,837h2M1096,1063h2M233,621h2M1673,611h2M1743,797h2M450,969h2M1490,544h2M1019,912h2M1032,514h2M1394,361h2M444,330h2M1058,950h2M984,524h2M1350,503h2M331,719h2M817,1161h2M373,525h2M1423,448h2M401,598h2M683,987h2M1392,438h2M1702,581h2M894,318h2M1222,610h2M1090,794h2M690,271h2M754,832h2M1672,848h2M1346,1155h2M1386,927h2M929,627h2M698,522h2M1436,941h2M751,452h2M642,645h2M1122,408h2M323,287h2M440,295h2M1558,380h2M1475,428h2M1066,437h2M1281,1075h2M806,1153h2M1592,1083h2M1082,740h2M1567,812h2M876,1047h2M1356,640h2M1230,558h2M1251,453h2M657,374h2M1524,721h2M459,655h2M1677,858h2M1749,506h2M1040,398h2M1069,401h2M1480,276h2M1609,991h2M961,650h2M203,933h2M681,939h2M1291,724h2M1233,886h2M845,292h2M1296,667h2M1558,915h2M1111,734h2M1450,1149h2M276,741h2M588,687h2M825,528h2M930,1167h2M899,319h2M631,834h2M839,342h2M512,1001h2M1642,754h2M660,687h2M989,1135h2M336,1113h2M1360,1151h2M1691,296h2M575,345h2M349,718h2M378,601h2M926,1084h2M1243,372h2M345,732h2M409,354h2M1699,691h2M1114,655h2M1395,1154h2M603,879h2M1041,820h2M1416,466h2M1671,1134h2M1525,1000h2M1755,273h2M1235,1118h2M1231,1062h2M270,623h2M1163,472h2M363,587h2M326,1017h2M1230,501h2M854,421h2M842,916h2M766,492h2M1329,949h2M1651,942h2M187,433h2M779,1024h2M1504,271h2M311,752h2M1233,339h2M547,1126h2M383,444h2M384,474h2M679,683h2M716,422h2M1451,414h2M947,347h2M1568,595h2M339,857h2M1353,700h2M957,847h2M1253,1128h2M479,1057h2M1615,1089h2M590,437h2M1047,505h2M687,996h2M200,938h2M362,770h2M291,444h2M859,758h2M1302,718h2M1210,310h2M778,651h2M701,451h2M455,498h2M1628,509h2M659,1161h2M430,521h2M590,1159h2M361,590h2M809,357h2M403,821h2M686,878h2M1707,1112h2M645,882h2M586,490h2M1720,1147h2M159,454h2M602,451h2M290,848h2M265,646h2M1380,922h2M681,590h2M671,402h2M1713,1101h2M1051,538h2M329,966h2M766,924h2M1148,765h2M931,731h2M853,396h2M990,618h2M520,1155h2M362,891h2M452,743h2M1491,1139h2M1757,1158h2M922,637h2M313,597h2M1503,575h2M1138,641h2M1587,904h2M1508,481h2M521,344h2M1601,745h2M933,834h2M642,558h2M903,639h2M1711,1165h2M692,770h2M879,343h2M1242,332h2M713,887h2M299,822h2M648,339h2M1017,586h2M1741,839h2M892,781h2M175,468h2M1199,1025h2M1435,1078h2M1238,484h2M1047,829h2M1279,552h2M568,418h2M321,1086h2M235,329h2M239,934h2M680,783h2M1694,743h2M1003,603h2M1198,463h2M586,594h2M1154,690h2M1544,1033h2M1530,774h2M1391,1052h2M911,388h2M410,335h2M429,704h2M1514,830h2M1024,857h2M622,491h2M1597,824h2M377,795h2M948,989h2M1007,977h2M1382,324h2M1295,944h2M508,282h2M1559,762h2M751,748h2M1348,1050h2M635,536h2M744,1083h2M1386,368h2M987,1077h2M1186,382h2M1093,460h2M1705,364h2M336,808h2M1566,1155h2M889,1036h2M641,728h2M1038,992h2M1503,1036h2M736,1074h2M810,447h2M532,724h2M1211,279h2M328,1092h2M526,356h2M455,333h2M1712,1162h2M715,339h2M915,539h2M1233,994h2M789,355h2M412,623h2M1304,951h2M1719,646h2M1440,1103h2M1123,795h2M1187,838h2M374,1149h2M1412,779h2M305,791h2M517,951h2M568,627h2M1368,1086h2M408,532h2M1037,649h2M1631,539h2M1292,925h2M539,1040h2M798,1123h2M1687,824h2M253,900h2M781,941h2M1553,1009h2M366,564h2M1126,544h2M959,602h2M1248,1100h2M658,491h2M1115,846h2M1366,312h2M968,352h2M340,703h2M446,1037h2M1438,937h2M572,873h2M1667,1042h2M1187,989h2M1333,331h2M1190,973h2M236,965h2M1671,534h2M473,1057h2M1376,694h2M510,950h2M416,999h2M1484,289h2M443,902h2M284,432h2M324,659h2M234,754h2M411,935h2M1477,1030h2M532,829h2M404,356h2M1590,892h2M1278,852h2M443,863h2M1724,951h2M1263,619h2M1004,415h2" stroke="#55554f" stroke-width="2" fill="none" shape-rendering="crispEdges"/>
<path d="M245,343h2M1235,706h2M515,984h2M1515,348h2M1081,339h2M280,331h2M735,401h2M171,765h2M404,976h2M398,387h2M489,633h2M1237,823h2M852,726h2M1484,621h2M1669,355h2M1356,745h2M446,895h2M190,283h2M1173,515h2M1205,699h2M155,1063h2M1284,763h2M1694,401h2M1446,359h2M318,891h2M283,539h2M1346,810h2M453,559h2M1649,986h2M432,805h2M1311,1123h2M361,654h2M282,1032h2M690,509h2M567,505h2M1089,774h2M1086,347h2M1730,651h2M1023,298h2M430,928h2M670,1025h2M1230,913h2M1066,523h2M223,929h2M681,497h2M1572,615h2M557,588h2M779,1110h2M988,522h2M661,709h2M1659,579h2M888,1071h2M1527,509h2M1731,949h2M225,882h2M563,301h2M252,588h2M550,669h2M893,740h2M438,925h2M475,924h2M231,844h2M1080,832h2M1413,1067h2M282,897h2M485,971h2M599,336h2M918,441h2M688,386h2M246,920h2M1244,913h2M884,607h2M1648,270h2M1460,694h2M630,1130h2M725,318h2M900,597h2M736,902h2M590,1000h2M333,857h2M560,564h2M472,559h2M372,920h2M1215,428h2M1587,1115h2M456,420h2M964,1143h2M975,274h2M615,952h2M1006,517h2M168,667h2M593,433h2M1456,1080h2M606,579h2M152,1093h2M1374,1152h2M1655,607h2M840,365h2M1223,836h2M1447,358h2M229,677h2M242,463h2M1119,892h2M222,700h2M1601,533h2M1216,309h2M327,492h2M249,643h2M1608,980h2M667,322h2M1479,972h2M899,857h2M482,913h2M1123,663h2M1074,547h2M1587,1090h2M917,885h2M1268,970h2M928,474h2M566,1160h2M345,726h2M243,533h2M554,962h2M1050,513h2M826,495h2M443,718h2M754,611h2M479,327h2M179,721h2M150,1077h2M326,892h2M1324,878h2M1610,519h2M928,859h2M272,567h2M199,812h2M357,628h2M1008,880h2M967,515h2M1612,715h2M229,304h2M708,518h2M869,435h2M1047,631h2M1207,366h2M1751,555h2M1246,580h2M622,359h2M1220,565h2M505,778h2M1308,541h2M1217,771h2M1402,709h2M159,1156h2M945,960h2M334,824h2M1654,1059h2M205,942h2M897,964h2M701,892h2M514,847h2M1314,778h2M376,1123h2M799,484h2M1001,980h2M1678,899h2M1563,784h2M1373,741h2M203,294h2M1453,807h2M903,1126h2M1397,1144h2M1242,909h2M1444,297h2M602,963h2M562,830h2M600,1151h2M1307,351h2M1538,344h2M1185,1000h2M898,1032h2M1271,604h2M211,1088h2M579,442h2M1725,366h2M723,1081h2M1710,618h2M1560,707h2M1266,292h2M309,344h2M1325,618h2M816,1157h2M1601,1010h2M331,635h2M1604,758h2M566,837h2M452,450h2M178,336h2M969,959h2M563,602h2M467,757h2M1748,483h2M455,783h2M936,688h2M1675,931h2M925,509h2M604,896h2M1227,442h2M741,901h2M635,663h2M291,350h2M1164,927h2M1722,665h2M304,853h2M669,948h2M770,523h2M1296,1023h2M579,816h2M342,475h2M811,830h2M1110,546h2M653,606h2M513,381h2M1276,384h2M826,274h2M638,1013h2M1147,1079h2M616,358h2M1563,447h2M847,355h2M283,271h2M1340,435h2M1155,957h2M1672,746h2M1197,575h2M1750,1075h2M1684,1127h2M1731,619h2M1523,1125h2M534,1146h2M1492,525h2M1651,1151h2M1063,587h2M950,446h2M642,567h2M1324,776h2M558,797h2M992,1123h2M1564,389h2M950,780h2M440,813h2M1639,549h2M1538,1076h2M725,303h2M1382,888h2M593,838h2M574,557h2M753,1034h2M193,1026h2M1460,1008h2M1607,734h2M849,378h2M1209,716h2M374,488h2M1241,341h2M1092,765h2M1402,877h2M766,585h2M1545,978h2M578,1045h2M310,291h2M1541,407h2M1708,907h2M1724,1058h2M1209,975h2M593,563h2M1674,560h2M1490,927h2M306,334h2M1113,538h2M1090,1072h2M1474,508h2M912,792h2M1690,448h2M674,962h2M623,648h2M1717,568h2M549,647h2M1510,1165h2M416,1079h2M935,571h2M616,587h2M458,464h2M1238,608h2M210,503h2M610,743h2M1584,1082h2M774,325h2M1605,697h2M1493,339h2M1575,365h2M939,1052h2M1099,671h2M1197,615h2M1640,1031h2M1531,689h2M1723,849h2M1732,411h2M1483,318h2M1680,1159h2M853,1020h2M1496,981h2M1202,1076h2M354,496h2M820,796h2M1702,384h2M1731,274h2M1615,438h2M560,868h2M150,722h2M613,434h2M458,745h2M1483,947h2M896,963h2M596,617h2M1409,599h2M1304,1073h2M181,648h2M284,640h2M827,563h2M1679,777h2M672,352h2M1158,1123h2M389,316h2M1254,1023h2M1107,1166h2M1468,1103h2M1468,459h2M603,754h2M1238,908h2M903,845h2M1023,641h2M373,871h2M1683,284h2M878,516h2M834,756h2M397,1136h2M1667,429h2M1667,1035h2M276,872h2M1611,1078h2M465,943h2M1355,594h2M711,390h2M1588,725h2M1598,301h2M1135,597h2M883,357h2M772,1092h2M1620,1083h2M540,424h2M1748,280h2M1597,1144h2M1203,928h2M679,1045h2M1410,1075h2M1053,1029h2M1307,398h2M1651,358h2M1048,886h2M918,1073h2M201,908h2M858,777h2M1362,861h2M793,716h2M766,529h2M1535,714h2M1041,462h2M351,456h2M1178,766h2M360,760h2M670,527h2M1574,771h2M1042,867h2M1288,789h2M541,750h2M1264,973h2M383,362h2M427,565h2M640,589h2M243,845h2M322,365h2M1178,567h2M1100,306h2M639,968h2M463,415h2M605,1137h2M172,720h2M402,1051h2M1320,1073h2M708,709h2M379,523h2M242,915h2M1717,1136h2M1278,918h2M446,907h2M1474,437h2M1229,889h2M1065,448h2M481,1127h2M1335,393h2M1088,788h2M1144,1109h2M149,324h2M1215,1121h2M424,898h2M1536,746h2M642,870h2M1609,624h2M930,1124h2M1287,920h2M198,550h2M584,706h2M1106,689h2M792,774h2M631,779h2M304,312h2M1227,1108h2M812,304h2M972,909h2M473,1104h2M1612,624h2M421,879h2M942,914h2M221,749h2M1510,973h2M1371,457h2M501,692h2M386,651h2M727,1052h2M847,293h2M1224,798h2M1243,966h2M1127,615h2M387,974h2M848,577h2M309,478h2M571,1026h2M1196,682h2M1125,764h2M365,389h2M1158,860h2M266,509h2M1576,1164h2M625,459h2M1591,1001h2M588,339h2M519,1014h2M927,547h2M835,966h2M1228,349h2M671,1137h2M961,937h2M749,1108h2M1082,1154h2M340,1052h2M429,341h2M227,310h2M632,1041h2M769,841h2M1126,1000h2M1635,491h2M1012,951h2M761,1047h2M203,1143h2M702,647h2M940,881h2M1354,1137h2M1086,729h2M1322,1138h2M1258,818h2M264,418h2M1613,447h2M1120,435h2M639,954h2M685,475h2M1395,993h2M370,294h2M946,805h2M180,919h2M219,430h2M375,1076h2M627,674h2M996,979h2M1212,276h2M1142,318h2M1345,1078h2M1257,1080h2M567,1121h2M1380,904h2M238,575h2M1108,495h2M294,770h2M764,716h2M801,597h2M1157,888h2M1364,1125h2M1107,1083h2M995,786h2M1606,530h2M878,773h2M1322,778h2M1395,560h2M743,877h2M576,1004h2M1207,656h2M972,281h2M475,497h2M1575,304h2M1117,862h2M817,364h2M243,609h2M401,910h2M375,365h2M1403,700h2M660,1018h2M254,865h2M454,289h2M1167,1109h2M1204,531h2M329,827h2M541,992h2M1007,583h2M382,850h2M1258,1123h2M254,1006h2M1226,1075h2M414,1047h2M423,631h2M1268,747h2M813,761h2M1095,604h2M942,643h2M857,961h2M661,354h2M327,678h2M1080,439h2M1718,570h2M299,483h2M466,837h2M1218,1045h2M772,467h2M729,460h2M1494,1130h2M1148,1159h2M233,488h2M839,812h2M1537,766h2M913,1040h2M780,832h2M1671,290h2M491,758h2M1294,307h2M375,773h2M1414,641h2M693,836h2M1642,915h2M1109,955h2M295,443h2M190,341h2M306,1112h2M302,1012h2M812,1093h2M1666,1082h2M1756,1011h2M1578,374h2M1213,948h2M888,743h2M195,1120h2M1677,1074h2M765,369h2M349,832h2M1185,1023h2M580,1090h2M1712,820h2M572,612h2M207,495h2M1081,498h2M1671,369h2M336,623h2M1369,406h2M690,991h2M724,697h2M316,1157h2M1190,875h2" stroke="#7d7d6e" stroke-width="2" fill="none" shape-rendering="crispEdges"/>
<path d="M1305,395h2M1100,868h2M1320,1077h2M1614,664h2M857,292h2M961,669h2M881,968h2M257,736h2M1560,825h2M555,758h2M324,1089h2M1118,942h2M545,1114h2M415,331h2M204,1047h2M678,841h2M1738,427h2M1531,1107h2M295,544h2M1279,696h2M517,475h2M1265,1123h2M464,942h2M290,1035h2M304,759h2M1439,678h2M312,319h2M1141,319h2M597,732h2M1313,475h2M1600,1051h2M296,669h2M1543,380h2M1467,1128h2M689,1047h2M1509,326h2M952,729h2M526,937h2M1694,878h2M912,310h2M1214,444h2M1631,1104h2M1687,785h2M1346,948h2M1275,941h2M1041,1032h2M399,612h2M591,356h2M473,1033h2M636,657h2M625,853h2M306,847h2M365,905h2M1694,997h2M1438,508h2M811,1071h2M459,482h2M332,953h2M1045,956h2M1558,879h2M1090,954h2M435,1100h2M1597,480h2M1214,534h2M226,531h2M268,835h2M598,348h2M1062,368h2M682,513h2M1038,310h2M1456,1154h2M876,801h2M186,367h2M447,965h2M1418,541h2M1355,815h2M1534,1025h2M1322,426h2M1718,908h2M572,786h2M1279,273h2M350,1148h2M258,494h2M532,947h2M286,844h2M973,1133h2M1734,912h2M1562,628h2M967,629h2M1325,626h2M1489,562h2M854,1036h2M1015,722h2M534,313h2M1432,897h2M1592,681h2M1602,700h2M1653,794h2M424,705h2M378,303h2M1106,666h2M656,739h2M1577,303h2M1728,578h2M844,344h2M505,551h2M1064,474h2M1218,811h2M1449,621h2M986,653h2M166,405h2M842,926h2M1614,675h2M795,335h2M437,336h2M1482,1157h2M285,687h2M515,283h2M445,1065h2M674,992h2M1699,507h2M462,585h2M1747,777h2M1713,1134h2M852,468h2M494,947h2M339,378h2M1174,514h2M177,377h2M1092,875h2M169,594h2M1742,606h2M1567,579h2M1297,511h2M1324,970h2M1505,878h2M530,987h2M1086,304h2M1237,624h2M889,1003h2M645,340h2M954,1130h2M994,954h2M1543,336h2M1475,659h2M749,913h2M874,700h2M892,1065h2M1142,353h2M799,756h2M235,477h2M873,660h2M347,874h2M643,365h2M636,1139h2M1029,1089h2M515,902h2M1486,940h2M648,686h2M1192,973h2M1058,1014h2M536,343h2M1705,658h2M1140,760h2M900,941h2M1371,738h2M581,905h2M818,1087h2M968,406h2M240,472h2M1405,465h2M505,913h2M1663,1006h2M797,1107h2M647,1105h2M1268,735h2M999,281h2M887,323h2M1175,1140h2M1381,448h2M1142,753h2M1536,680h2M1236,1079h2M1621,378h2M1275,833h2M330,1060h2M1171,1090h2M1584,796h2M1129,862h2M1265,769h2M316,772h2M1038,721h2M1232,469h2M490,409h2M1108,773h2M721,589h2M1195,1066h2M350,954h2M871,355h2M1466,1072h2M1392,806h2M550,545h2M722,331h2M1728,857h2M1079,565h2M484,1120h2M214,875h2M290,450h2M722,835h2M777,362h2M1377,1151h2M1673,1085h2M576,1074h2M1316,1100h2M1300,910h2M1364,502h2M1319,1160h2M147,576h2M1091,857h2M1662,693h2M1066,537h2M1018,421h2M1057,948h2M346,825h2M1099,532h2M1559,899h2M1611,840h2M568,673h2M963,427h2M831,461h2M264,930h2M240,889h2M1307,678h2M769,918h2M1742,1107h2M1732,564h2M1156,322h2M394,490h2M675,368h2M188,958h2M1664,557h2M924,906h2M1105,563h2M1164,652h2M1749,349h2M167,858h2M1462,734h2M421,519h2M1197,809h2M1264,783h2M179,808h2M665,550h2M416,784h2M1491,983h2M592,855h2M824,1013h2M1413,421h2M1056,403h2M1635,698h2M470,1082h2M346,424h2M1481,426h2M1565,270h2M1227,1147h2M307,724h2M1004,576h2M1338,630h2M839,607h2M1329,838h2M948,784h2M1725,343h2M333,1079h2M1069,988h2M617,686h2M403,1114h2M1133,577h2M425,394h2M755,346h2M928,553h2M843,652h2M1161,981h2M1303,337h2M1268,387h2M387,1053h2M1112,349h2M482,983h2M686,1008h2M1670,1163h2M213,863h2M763,964h2M1412,720h2M1251,1016h2M268,542h2M672,790h2M712,1144h2M302,461h2M904,1114h2M428,1146h2M1746,830h2M518,576h2M393,556h2M1402,456h2M893,756h2M235,664h2M1604,706h2M960,646h2M274,389h2M1342,734h2M1252,905h2M1279,637h2M1564,722h2M964,497h2M486,480h2M1510,547h2M1408,454h2M1159,335h2M635,981h2M954,1091h2M1249,489h2M793,936h2M884,285h2M1580,781h2M915,803h2M995,669h2M1691,1002h2M1304,638h2M1677,489h2M418,463h2M796,815h2M386,919h2" stroke="#4f7a80" stroke-width="2" fill="none" shape-rendering="crispEdges"/>
<path d="M1627,626h2M665,409h2M596,1033h2M1593,710h2M752,793h2M975,624h2M686,641h2M814,1006h2M1603,968h2M451,524h2M1060,711h2M1090,554h2M652,298h2M400,843h2M704,612h2M1020,376h2M958,526h2M237,477h2M154,902h2M1154,563h2M506,500h2M1438,978h2M201,716h2M1151,1075h2M1082,484h2M397,1015h2M1226,493h2M993,748h2M1556,891h2M1019,697h2M1359,944h2M1517,393h2M386,640h2M271,905h2M300,732h2M748,416h2M1300,1120h2M1284,1105h2M1302,1092h2M960,1064h2M1669,1046h2M1674,1138h2M823,600h2M814,478h2M1235,795h2M1340,1051h2M1048,870h2M1094,523h2M169,748h2M1615,608h2M1643,430h2M969,360h2M1316,700h2M381,910h2M1584,877h2M326,905h2M659,820h2M1228,867h2M1105,634h2M1729,831h2M1168,490h2M1722,542h2M1396,880h2M375,424h2M393,768h2M587,1142h2M697,339h2M1642,655h2M409,702h2M1040,693h2M536,799h2M575,1090h2M619,669h2M1493,484h2M1373,372h2M1284,477h2M1374,614h2M1480,1003h2M834,359h2M1184,1078h2M1531,372h2M1056,541h2M931,1064h2M936,1081h2M1531,851h2M946,793h2M359,1046h2M1612,390h2M345,1125h2M392,989h2M393,549h2M452,409h2M903,803h2M990,644h2M1705,995h2M516,745h2M1756,507h2M904,388h2M1590,875h2M1603,1073h2M254,982h2M566,587h2M644,738h2M1115,500h2M1571,421h2M440,888h2M1624,520h2M1047,1056h2M1583,661h2M425,1088h2M1187,781h2M256,885h2M1393,458h2M1402,578h2M1165,1049h2M1661,796h2M192,296h2M602,955h2M247,732h2M1259,465h2M1351,721h2M790,426h2M1366,530h2M1108,830h2M474,1087h2M319,901h2M154,434h2M524,752h2M1372,515h2M235,464h2M1297,1027h2M946,413h2M1739,614h2M1378,646h2M734,487h2M909,856h2M1306,1087h2M907,725h2M537,579h2M1636,334h2M360,779h2M1617,1016h2M410,637h2M1372,523h2M642,769h2M241,1137h2M546,941h2M1143,1137h2M507,1078h2M1648,590h2M306,1028h2M320,1148h2M1351,377h2M342,883h2M1560,1106h2M1093,914h2M155,524h2M150,973h2M409,781h2M297,383h2M1075,843h2M1571,1039h2M1157,816h2M1292,357h2M439,816h2M1195,865h2M252,594h2M317,702h2M1728,666h2M167,348h2M636,844h2M805,631h2M1468,1095h2M697,743h2M1288,1135h2M501,1075h2M1425,984h2M1561,759h2M1408,937h2M1190,512h2M1397,795h2M171,488h2M224,558h2M1360,1007h2M154,1022h2M1587,800h2M1224,955h2M1055,572h2M1244,596h2M1416,1067h2M750,743h2M1014,917h2M306,1058h2M1721,770h2M260,282h2M1290,454h2" stroke="#80804a" stroke-width="2" fill="none" shape-rendering="crispEdges"/>
<polygon points="530.5,863.2 1245.9,945.3 1232.2,1005.4 548.6,921" fill="#1b5c0c"/>
<polygon points="1230.5,943.6 1245.9,945.3 1232.2,1005.4" fill="#2a8a1c"/>
<path d="M530.5,863.2L1245.9,945.3M530.5,863.2L548.6,921M548.6,921L1232.2,1005.4M530.5,863.2L1232.2,1005.4M548.6,921L580,875.5M548.6,921L659,881M580,875.5L590,870" stroke="#1f8c1a" stroke-width="2.8" fill="none" stroke-linecap="round"/>
<clipPath id="redclip"><polygon points="757,563 775,563 793,560.7 806.5,556.5 816.5,555 826.5,555 836.5,553.2 844.8,546.5 849.8,543.2 859.8,542.4 868,544 876.5,553 883,556.5 891.4,560 899.8,565 913,568 924.7,571.5 936.4,576.5 946.4,578.2 953,575.7 963,572.4 973,569 983,567.3 990,569.8 1000,566.5 1010,563.2 1018.3,556.5 1023.3,554 1035,555 1038.3,560 1046.6,566.5 1055,571.5 1066.6,576.5 1080,579.8 1088,583.2 1096.5,586.5 1106.5,589.8 1119.8,590.7 1129.8,586.5 1139.8,581.5 1148,579.8 1159.8,580.7 1168,579.8 1179.8,574.8 1188,568.2 1194.7,566.2 1203,567.4 1209.7,573.2 1219.7,578.2 1229.7,583.2 1235.5,586.5 1237.2,591 1244,800 1246.5,900 1245.9,945.3 530.5,863.2 557.7,807.4 584,807"/></clipPath>
<polygon points="757,563 775,563 793,560.7 806.5,556.5 816.5,555 826.5,555 836.5,553.2 844.8,546.5 849.8,543.2 859.8,542.4 868,544 876.5,553 883,556.5 891.4,560 899.8,565 913,568 924.7,571.5 936.4,576.5 946.4,578.2 953,575.7 963,572.4 973,569 983,567.3 990,569.8 1000,566.5 1010,563.2 1018.3,556.5 1023.3,554 1035,555 1038.3,560 1046.6,566.5 1055,571.5 1066.6,576.5 1080,579.8 1088,583.2 1096.5,586.5 1106.5,589.8 1119.8,590.7 1129.8,586.5 1139.8,581.5 1148,579.8 1159.8,580.7 1168,579.8 1179.8,574.8 1188,568.2 1194.7,566.2 1203,567.4 1209.7,573.2 1219.7,578.2 1229.7,583.2 1235.5,586.5 1237.2,591 1244,800 1246.5,900 1245.9,945.3 530.5,863.2 557.7,807.4 584,807" fill="#85080a"/>
<g clip-path="url(#redclip)">
<defs><linearGradient id="rg" x1="0" y1="0" x2="0" y2="1"><stop offset="0" stop-color="#fa1010" stop-opacity=".8"/><stop offset=".5" stop-color="#f41010" stop-opacity=".5"/><stop offset="1" stop-color="#f01010" stop-opacity="0"/></linearGradient></defs>
<rect x="500" y="540" width="760" height="330" fill="url(#rg)"/>
<polygon points="874.4,600.7 871.1,605.3 866.2,609.7 859.7,613.8 851.9,617.5 842.8,620.7 832.7,623.2 821.9,625.1 810.7,626.2 799.4,626.5 788.3,626 777.8,624.7 768,622.7 759.4,620 752,616.7 746.2,612.9 741.9,608.7 739.4,604.3 738.6,599.7 739.4,595 742,590.4 746.1,586 751.6,581.9 758.4,578.2 766.3,574.9 775.1,572.2 784.6,570 794.6,568.4 804.9,567.5 815.2,567.3 825.3,567.7 835,568.7 844.2,570.4 852.5,572.7 859.8,575.6 866,579 870.8,582.8 874.1,587 875.9,591.4 876,596 874.4,600.7" fill="#760404" opacity=".5"/>
<polygon points="876.8,567.6 873.3,572.3 868.1,576.8 861.2,580.9 852.8,584.7 843,587.9 832.2,590.5 820.7,592.4 808.7,593.5 796.6,593.9 784.7,593.4 773.4,592.1 763,590 753.7,587.3 745.9,583.9 739.7,580 735.2,575.8 732.5,571.3 731.6,566.6 732.6,561.9 735.4,557.2 742,590.4 739.4,595 738.6,599.7 739.4,604.3 741.9,608.7 746.2,612.9 752,616.7 759.4,620 768,622.7 777.8,624.7 788.3,626 799.4,626.5 810.7,626.2 821.9,625.1 832.7,623.2 842.8,620.7 851.9,617.5 859.7,613.8 866.2,609.7 871.1,605.3 874.4,600.7" fill="#fc1214" opacity=".85"/>
<polyline points="876.8,567.6 873.3,572.3 868.1,576.8 861.2,580.9 852.8,584.7 843,587.9 832.2,590.5 820.7,592.4 808.7,593.5 796.6,593.9 784.7,593.4 773.4,592.1 763,590 753.7,587.3 745.9,583.9 739.7,580 735.2,575.8 732.5,571.3 731.6,566.6 732.6,561.9 735.4,557.2 739.8,552.8 745.8,548.6 753.1,544.9 761.5,541.6 770.9,538.8 781.1,536.6 791.7,535 802.6,534.1 813.6,533.9 824.4,534.3 834.8,535.3 844.5,537 853.4,539.4 861.2,542.3 867.8,545.7 872.9,549.5 876.5,553.7 878.4,558.2 878.5,562.9 876.8,567.6" fill="none" stroke="#fc1416" stroke-width="6" opacity=".75"/>
<polygon points="814.9,688 810.6,694.2 804.3,700.1 796.2,705.6 786.5,710.5 775.4,714.8 763.2,718.2 750.3,720.7 736.9,722.2 723.5,722.7 710.5,722 698.2,720.3 687,717.6 677.2,713.9 669,709.5 662.6,704.4 658.3,698.8 655.9,692.8 655.7,686.7 657.4,680.5 661.1,674.4 666.5,668.6 673.6,663.2 682.1,658.3 691.7,654 702.4,650.4 713.7,647.5 725.6,645.5 737.6,644.3 749.6,643.9 761.3,644.5 772.5,645.8 783,648.1 792.4,651.1 800.6,654.9 807.4,659.3 812.6,664.3 816.1,669.9 817.6,675.7 817.3,681.8 814.9,688" fill="#760404" opacity=".5"/>
<polygon points="816.8,651.9 812.1,658.2 805.4,664.2 796.7,669.8 786.3,674.9 774.4,679.3 761.3,682.8 747.4,685.4 733,686.9 718.6,687.3 704.6,686.6 691.5,684.9 679.4,682.1 668.9,678.4 660.2,673.9 653.5,668.6 648.8,662.9 646.4,656.8 646.2,650.6 648.2,644.3 652.2,638.1 661.1,674.4 657.4,680.5 655.7,686.7 655.9,692.8 658.3,698.8 662.6,704.4 669,709.5 677.2,713.9 687,717.6 698.2,720.3 710.5,722 723.5,722.7 736.9,722.2 750.3,720.7 763.2,718.2 775.4,714.8 786.5,710.5 796.2,705.6 804.3,700.1 810.6,694.2 814.9,688" fill="#fc1214" opacity=".85"/>
<polyline points="816.8,651.9 812.1,658.2 805.4,664.2 796.7,669.8 786.3,674.9 774.4,679.3 761.3,682.8 747.4,685.4 733,686.9 718.6,687.3 704.6,686.6 691.5,684.9 679.4,682.1 668.9,678.4 660.2,673.9 653.5,668.6 648.8,662.9 646.4,656.8 646.2,650.6 648.2,644.3 652.2,638.1 658.1,632.2 665.7,626.7 674.8,621.7 685.2,617.4 696.6,613.7 708.7,610.9 721.3,608.8 734.2,607.6 747,607.2 759.5,607.8 771.5,609.2 782.6,611.4 792.6,614.5 801.4,618.3 808.7,622.8 814.2,627.9 818,633.5 819.7,639.4 819.3,645.6 816.8,651.9" fill="none" stroke="#fc1416" stroke-width="6" opacity=".75"/>
<polygon points="767.4,805.9 761.7,814.4 753.7,822.7 743.5,830.4 731.4,837.4 717.6,843.4 702.6,848.3 686.7,851.8 670.3,853.9 654.1,854.5 638.4,853.6 623.7,851.2 610.5,847.3 599.1,842.2 589.8,836 582.8,828.8 578.3,820.9 576.2,812.6 576.7,804 579.6,795.4 584.8,787 592,779 601.1,771.6 611.7,764.9 623.7,759 636.8,754 650.6,750.2 664.8,747.4 679.2,745.7 693.4,745.3 707.3,746 720.4,747.9 732.6,750.9 743.5,755 753,760.2 760.7,766.3 766.5,773.2 770.2,780.7 771.6,788.8 770.7,797.3 767.4,805.9" fill="#760404" opacity=".5"/>
<polygon points="768.7,766.3 762.6,775.1 754,783.5 743.1,791.5 730,798.7 715.2,804.9 698.9,809.9 681.8,813.5 664.1,815.7 646.6,816.3 629.7,815.4 613.9,812.9 599.7,808.9 587.5,803.6 577.5,797.2 570.1,789.8 565.4,781.7 563.3,773.2 564,764.4 567.2,755.6 572.9,747 584.8,787 579.6,795.4 576.7,804 576.2,812.6 578.3,820.9 582.8,828.8 589.8,836 599.1,842.2 610.5,847.3 623.7,851.2 638.4,853.6 654.1,854.5 670.3,853.9 686.7,851.8 702.6,848.3 717.6,843.4 731.4,837.4 743.5,830.4 753.7,822.7 761.7,814.4 767.4,805.9" fill="#fc1214" opacity=".85"/>
<polyline points="768.7,766.3 762.6,775.1 754,783.5 743.1,791.5 730,798.7 715.2,804.9 698.9,809.9 681.8,813.5 664.1,815.7 646.6,816.3 629.7,815.4 613.9,812.9 599.7,808.9 587.5,803.6 577.5,797.2 570.1,789.8 565.4,781.7 563.3,773.2 564,764.4 567.2,755.6 572.9,747 580.7,738.9 590.6,731.3 602.1,724.4 615,718.5 629,713.4 643.8,709.5 659,706.7 674.4,705 689.6,704.5 704.4,705.3 718.5,707.2 731.5,710.3 743.1,714.5 753.2,719.7 761.5,725.9 767.7,732.9 771.7,740.6 773.2,748.9 772.3,757.5 768.7,766.3" fill="none" stroke="#fc1416" stroke-width="6" opacity=".75"/>
<polygon points="1032,615.6 1029.7,620.6 1025.7,625.4 1019.9,629.9 1012.5,633.9 1003.7,637.3 993.7,640.1 982.7,642.1 971.1,643.3 959.3,643.6 947.4,643.1 935.9,641.7 925.1,639.5 915.2,636.6 906.6,633 899.5,628.9 894,624.4 890.2,619.5 888.2,614.5 887.9,609.5 889.5,604.6 892.8,599.8 897.6,595.4 903.9,591.4 911.4,587.9 920,584.9 929.5,582.6 939.6,580.9 950.2,579.9 961,579.6 971.8,580 982.3,581.2 992.4,583 1001.7,585.5 1010.2,588.6 1017.5,592.2 1023.6,596.3 1028.2,600.8 1031.2,605.6 1032.5,610.6 1032,615.6" fill="#760404" opacity=".5"/>
<polygon points="1037.1,582 1034.7,587.1 1030.4,592 1024.2,596.5 1016.3,600.6 1006.9,604.1 996.2,606.9 984.5,609 972.1,610.2 959.3,610.5 946.6,610 934.3,608.6 922.7,606.3 912.1,603.4 902.9,599.7 895.3,595.5 889.4,590.9 885.4,586 883.3,580.9 883.1,575.8 884.8,570.8 889.5,604.6 887.9,609.5 888.2,614.5 890.2,619.5 894,624.4 899.5,628.9 906.6,633 915.2,636.6 925.1,639.5 935.9,641.7 947.4,643.1 959.3,643.6 971.1,643.3 982.7,642.1 993.7,640.1 1003.7,637.3 1012.5,633.9 1019.9,629.9 1025.7,625.4 1029.7,620.6 1032,615.6" fill="#fc1214" opacity=".85"/>
<polyline points="1037.1,582 1034.7,587.1 1030.4,592 1024.2,596.5 1016.3,600.6 1006.9,604.1 996.2,606.9 984.5,609 972.1,610.2 959.3,610.5 946.6,610 934.3,608.6 922.7,606.3 912.1,603.4 902.9,599.7 895.3,595.5 889.4,590.9 885.4,586 883.3,580.9 883.1,575.8 884.8,570.8 888.3,566 893.5,561.6 900.2,557.5 908.3,553.9 917.5,551 927.6,548.6 938.4,546.9 949.7,545.9 961.2,545.6 972.6,546.1 983.9,547.2 994.6,549.1 1004.6,551.6 1013.6,554.7 1021.5,558.4 1028,562.5 1032.9,567.1 1036.2,571.9 1037.6,576.9 1037.1,582" fill="none" stroke="#fc1416" stroke-width="6" opacity=".75"/>
<polygon points="1022.3,701.6 1019.7,707.8 1015.2,713.7 1008.8,719.2 1000.6,724.2 990.9,728.5 979.8,731.9 967.8,734.4 955,735.9 941.9,736.4 928.9,735.7 916.3,734 904.5,731.3 893.8,727.6 884.5,723.2 876.8,718.1 871,712.4 867,706.4 865,700.3 864.9,694 866.8,688 870.6,682.1 876,676.7 883,671.7 891.3,667.4 900.8,663.8 911.2,660.9 922.3,658.9 933.8,657.6 945.6,657.3 957.3,657.8 968.7,659.2 979.6,661.5 989.8,664.5 998.9,668.3 1006.9,672.8 1013.4,677.8 1018.4,683.4 1021.6,689.3 1022.9,695.4 1022.3,701.6" fill="#760404" opacity=".5"/>
<polygon points="1027.7,665.1 1025,671.4 1020.2,677.4 1013.4,683.1 1004.6,688.2 994.2,692.5 982.3,696.1 969.4,698.6 955.7,700.2 941.6,700.6 927.6,699.9 914.1,698.2 901.4,695.4 890,691.6 880,687.1 871.8,681.9 865.5,676.1 861.3,670 859.2,663.7 859.2,657.4 861.3,651.2 866.8,688 864.9,694 865,700.3 867,706.4 871,712.4 876.8,718.1 884.5,723.2 893.8,727.6 904.5,731.3 916.3,734 928.9,735.7 941.9,736.4 955,735.9 967.8,734.4 979.8,731.9 990.9,728.5 1000.6,724.2 1008.8,719.2 1015.2,713.7 1019.7,707.8 1022.3,701.6" fill="#fc1214" opacity=".85"/>
<polyline points="1027.7,665.1 1025,671.4 1020.2,677.4 1013.4,683.1 1004.6,688.2 994.2,692.5 982.3,696.1 969.4,698.6 955.7,700.2 941.6,700.6 927.6,699.9 914.1,698.2 901.4,695.4 890,691.6 880,687.1 871.8,681.9 865.5,676.1 861.3,670 859.2,663.7 859.2,657.4 861.3,651.2 865.3,645.3 871.2,639.7 878.7,634.7 887.6,630.4 897.7,626.7 908.8,623.8 920.7,621.7 933,620.5 945.6,620.1 958.1,620.7 970.3,622.1 981.9,624.3 992.7,627.4 1002.5,631.3 1011.1,635.8 1018.1,640.9 1023.4,646.5 1026.9,652.5 1028.3,658.8 1027.7,665.1" fill="none" stroke="#fc1416" stroke-width="6" opacity=".75"/>
<polygon points="987.9,819 984.3,828.1 978.1,836.9 969.5,845.1 958.7,852.6 945.9,859 931.4,864.2 915.7,868 899.1,870.2 882.2,870.9 865.5,869.9 849.5,867.3 834.6,863.2 821.3,857.7 809.9,851.1 800.6,843.4 793.8,835 789.6,826.2 787.8,817 788.6,807.9 791.8,799 797.3,790.5 804.8,782.6 814.2,775.5 825.2,769.3 837.5,764.1 850.9,759.9 865,757 879.6,755.3 894.4,754.8 909,755.5 923.2,757.5 936.7,760.7 949.2,765.1 960.5,770.5 970.2,777 978.1,784.3 984,792.3 987.7,800.9 989.1,809.9 987.9,819" fill="#760404" opacity=".5"/>
<polygon points="994,779.1 990.2,788.4 983.6,797.5 974.4,805.9 962.8,813.6 949,820.2 933.4,825.6 916.5,829.5 898.6,831.8 880.4,832.5 862.3,831.5 845,828.8 829,824.5 814.7,818.9 802.4,812 792.6,804.1 785.3,795.5 780.8,786.4 779,777.1 780,767.7 783.5,758.6 791.8,799 788.6,807.9 787.8,817 789.6,826.2 793.8,835 800.6,843.4 809.9,851.1 821.3,857.7 834.6,863.2 849.5,867.3 865.5,869.9 882.2,870.9 899.1,870.2 915.7,868 931.4,864.2 945.9,859 958.7,852.6 969.5,845.1 978.1,836.9 984.3,828.1 987.9,819" fill="#fc1214" opacity=".85"/>
<polyline points="994,779.1 990.2,788.4 983.6,797.5 974.4,805.9 962.8,813.6 949,820.2 933.4,825.6 916.5,829.5 898.6,831.8 880.4,832.5 862.3,831.5 845,828.8 829,824.5 814.7,818.9 802.4,812 792.6,804.1 785.3,795.5 780.8,786.4 779,777.1 780,767.7 783.5,758.6 789.5,750 797.6,741.9 807.7,734.7 819.6,728.3 832.8,723 847.1,718.9 862.2,715.9 877.8,714.1 893.6,713.6 909.2,714.4 924.4,716.4 938.9,719.7 952.2,724.1 964.3,729.6 974.7,736.2 983.2,743.6 989.6,751.8 993.7,760.6 995.2,769.8 994,779.1" fill="none" stroke="#fc1416" stroke-width="6" opacity=".75"/>
<polygon points="1228.7,631.9 1227.9,636.9 1225.3,641.8 1220.8,646.3 1214.7,650.4 1207,653.9 1197.9,656.7 1187.6,658.7 1176.5,660 1164.8,660.3 1152.9,659.8 1141.1,658.4 1129.7,656.1 1119.1,653.2 1109.5,649.5 1101.2,645.4 1094.4,640.7 1089.2,635.8 1085.7,630.8 1084,625.7 1084.1,620.6 1085.9,615.8 1089.4,611.3 1094.4,607.2 1100.8,603.7 1108.5,600.6 1117.2,598.3 1126.7,596.6 1136.9,595.5 1147.6,595.3 1158.4,595.7 1169.2,596.9 1179.7,598.7 1189.7,601.3 1199,604.4 1207.4,608.1 1214.6,612.3 1220.5,616.8 1224.9,621.7 1227.7,626.8 1228.7,631.9" fill="#760404" opacity=".5"/>
<polygon points="1236.9,597.7 1236.1,602.8 1233.4,607.8 1228.7,612.4 1222.2,616.5 1214,620.1 1204.2,623 1193.3,625.1 1181.3,626.3 1168.8,626.6 1156,626.1 1143.4,624.7 1131.2,622.4 1119.8,619.4 1109.5,615.7 1100.6,611.4 1093.3,606.7 1087.7,601.7 1084,596.6 1082.2,591.4 1082.3,586.3 1084.1,620.6 1084,625.7 1085.7,630.8 1089.2,635.8 1094.4,640.7 1101.2,645.4 1109.5,649.5 1119.1,653.2 1129.7,656.1 1141.1,658.4 1152.9,659.8 1164.8,660.3 1176.5,660 1187.6,658.7 1197.9,656.7 1207,653.9 1214.7,650.4 1220.8,646.3 1225.3,641.8 1227.9,636.9 1228.7,631.9" fill="#fc1214" opacity=".85"/>
<polyline points="1236.9,597.7 1236.1,602.8 1233.4,607.8 1228.7,612.4 1222.2,616.5 1214,620.1 1204.2,623 1193.3,625.1 1181.3,626.3 1168.8,626.6 1156,626.1 1143.4,624.7 1131.2,622.4 1119.8,619.4 1109.5,615.7 1100.6,611.4 1093.3,606.7 1087.7,601.7 1084,596.6 1082.2,591.4 1082.3,586.3 1084.3,581.4 1088,576.9 1093.4,572.7 1100.2,569.1 1108.4,566.1 1117.7,563.7 1127.8,561.9 1138.7,560.9 1150,560.7 1161.6,561.1 1173.1,562.3 1184.3,564.1 1195,566.7 1205,569.9 1213.9,573.6 1221.7,577.8 1228,582.5 1232.8,587.4 1235.8,592.5 1236.9,597.7" fill="none" stroke="#fc1416" stroke-width="6" opacity=".75"/>
<polygon points="1211.6,719.5 1210.6,726.2 1207.3,732.6 1202,738.6 1194.7,744 1185.5,748.6 1174.7,752.4 1162.6,755.1 1149.5,756.8 1135.7,757.2 1121.8,756.5 1108,754.6 1094.7,751.7 1082.4,747.7 1071.4,742.9 1062,737.3 1054.3,731.2 1048.6,724.7 1044.9,718 1043.2,711.3 1043.7,704.7 1046.1,698.4 1050.5,692.5 1056.6,687.2 1064.3,682.5 1073.3,678.6 1083.6,675.5 1094.7,673.3 1106.6,672 1118.9,671.6 1131.4,672.2 1143.8,673.7 1155.9,676.1 1167.4,679.4 1178.1,683.5 1187.6,688.3 1195.9,693.8 1202.6,699.7 1207.5,706.1 1210.6,712.8 1211.6,719.5" fill="#760404" opacity=".5"/>
<polygon points="1220.8,682.4 1219.8,689.2 1216.4,695.8 1210.8,701.9 1203,707.5 1193.1,712.2 1181.6,716.1 1168.6,718.9 1154.5,720.6 1139.7,721 1124.6,720.3 1109.8,718.4 1095.6,715.3 1082.3,711.3 1070.5,706.3 1060.4,700.6 1052.1,694.4 1046,687.7 1042.1,680.9 1040.4,674 1040.9,667.3 1043.7,704.7 1043.2,711.3 1044.9,718 1048.6,724.7 1054.3,731.2 1062,737.3 1071.4,742.9 1082.4,747.7 1094.7,751.7 1108,754.6 1121.8,756.5 1135.7,757.2 1149.5,756.8 1162.6,755.1 1174.7,752.4 1185.5,748.6 1194.7,744 1202,738.6 1207.3,732.6 1210.6,726.2 1211.6,719.5" fill="#fc1214" opacity=".85"/>
<polyline points="1220.8,682.4 1219.8,689.2 1216.4,695.8 1210.8,701.9 1203,707.5 1193.1,712.2 1181.6,716.1 1168.6,718.9 1154.5,720.6 1139.7,721 1124.6,720.3 1109.8,718.4 1095.6,715.3 1082.3,711.3 1070.5,706.3 1060.4,700.6 1052.1,694.4 1046,687.7 1042.1,680.9 1040.4,674 1040.9,667.3 1043.5,660.9 1048.2,655 1054.7,649.6 1062.9,644.9 1072.6,640.9 1083.5,637.8 1095.5,635.5 1108.1,634.2 1121.2,633.8 1134.6,634.4 1147.8,635.9 1160.8,638.4 1173.1,641.7 1184.5,645.8 1194.8,650.7 1203.6,656.2 1210.9,662.3 1216.3,668.8 1219.6,675.5 1220.8,682.4" fill="none" stroke="#fc1416" stroke-width="6" opacity=".75"/>
<polygon points="1228.8,851.9 1227.7,861.4 1224,870.6 1217.7,879.2 1208.9,887 1197.8,893.7 1184.6,899.1 1169.9,903.1 1153.8,905.4 1137,906.1 1119.9,905.1 1103,902.3 1086.9,898.1 1071.9,892.3 1058.6,885.4 1047.2,877.4 1038,868.6 1031.2,859.3 1026.9,849.8 1025.1,840.3 1025.8,831 1029,822.1 1034.4,813.9 1041.8,806.4 1051.1,799.9 1062.1,794.5 1074.4,790.2 1087.8,787.1 1102,785.3 1116.7,784.8 1131.6,785.6 1146.5,787.7 1161,791 1174.8,795.6 1187.6,801.3 1199.2,808 1209.2,815.6 1217.4,824 1223.5,833 1227.4,842.4 1228.8,851.9" fill="#760404" opacity=".5"/>
<polygon points="1240.2,811.1 1239.1,820.9 1235.2,830.3 1228.5,839.2 1219.1,847.2 1207.2,854.2 1193.1,859.8 1177.2,863.9 1159.9,866.3 1141.7,867 1123.2,865.9 1105,863.1 1087.6,858.7 1071.4,852.8 1057,845.6 1044.8,837.3 1034.9,828.3 1027.6,818.8 1023,809 1021.2,799.2 1022,789.7 1025.8,831 1025.1,840.3 1026.9,849.8 1031.2,859.3 1038,868.6 1047.2,877.4 1058.6,885.4 1071.9,892.3 1086.9,898.1 1103,902.3 1119.9,905.1 1137,906.1 1153.8,905.4 1169.9,903.1 1184.6,899.1 1197.8,893.7 1208.9,887 1217.7,879.2 1224,870.6 1227.7,861.4 1228.8,851.9" fill="#fc1214" opacity=".85"/>
<polyline points="1240.2,811.1 1239.1,820.9 1235.2,830.3 1228.5,839.2 1219.1,847.2 1207.2,854.2 1193.1,859.8 1177.2,863.9 1159.9,866.3 1141.7,867 1123.2,865.9 1105,863.1 1087.6,858.7 1071.4,852.8 1057,845.6 1044.8,837.3 1034.9,828.3 1027.6,818.8 1023,809 1021.2,799.2 1022,789.7 1025.4,780.6 1031.2,772.2 1039.2,764.6 1049.2,758 1061,752.5 1074.1,748.1 1088.5,745 1103.6,743.2 1119.4,742.6 1135.3,743.4 1151.2,745.6 1166.8,749 1181.6,753.6 1195.4,759.4 1207.8,766.2 1218.6,774 1227.5,782.5 1234.2,791.7 1238.5,801.3 1240.2,811.1" fill="none" stroke="#fc1416" stroke-width="6" opacity=".75"/>
<polygon points="868.7,695.7 852.6,730.3 851.6,707.9" fill="#7a0606" opacity="0.45"/>
<polygon points="764.8,638.9 786.4,668.5 798.6,672" fill="#f01010" opacity="0.25"/>
<polygon points="693.3,610.4 680,621.3 704.5,636.6" fill="#6e0505" opacity="0.35"/>
<polygon points="1047.9,605.4 1091,593.8 1050.7,624.1" fill="#7a0606" opacity="0.35"/>
<polygon points="1069.6,630.3 1059.3,611.6 1068.2,618.6" fill="#ff1c1c" opacity="0.25"/>
<polygon points="1147,880.5 1181.8,841.6 1161.3,875.7" fill="#ff1c1c" opacity="0.25"/>
<polygon points="717.8,666.1 700.6,683.1 729.3,684" fill="#7a0606" opacity="0.25"/>
<polygon points="740.7,713.9 726.5,715.1 710,697.8" fill="#7a0606" opacity="0.25"/>
<polygon points="1198.1,676.4 1217.5,685.2 1219.5,666.8" fill="#ff1c1c" opacity="0.45"/>
<polygon points="1177.9,603.9 1170.1,594.4 1163.7,600.4" fill="#7a0606" opacity="0.35"/>
<polygon points="1223.1,824.7 1235.8,837.4 1234.3,856.6" fill="#7a0606" opacity="0.45"/>
<polygon points="731.2,544 745.9,580.9 734,577.6" fill="#7a0606" opacity="0.25"/>
<polygon points="1124.5,595.7 1155.8,605.4 1156.1,586.1" fill="#6e0505" opacity="0.35"/>
<polygon points="675.1,615.5 675.4,609 701.7,606.8" fill="#6e0505" opacity="0.35"/>
<polygon points="878.5,757.4 893.5,776.8 919.5,797.8" fill="#6e0505" opacity="0.45"/>
<polygon points="972.5,536.4 992.6,530.9 954.2,550" fill="#f01010" opacity="0.25"/>
<polygon points="1106.2,759 1127.8,748.4 1110.7,758.8" fill="#f01010" opacity="0.45"/>
<polygon points="969.2,762.3 947.9,736.8 949.2,747.3" fill="#f01010" opacity="0.25"/>
<polygon points="881.8,528.1 893.4,550.4 851.2,518.5" fill="#f01010" opacity="0.35"/>
<polygon points="1021.3,688 995.6,694.1 1031.1,666.9" fill="#6e0505" opacity="0.25"/>
<polygon points="696.1,717.3 702.9,713.3 682.5,730.7" fill="#7a0606" opacity="0.35"/>
<polygon points="637.5,802.5 622.8,803.2 619.8,794.2" fill="#7a0606" opacity="0.25"/>
<polygon points="720.9,641.6 700.9,661 713.7,656.9" fill="#6e0505" opacity="0.35"/>
<polygon points="931.2,656.2 904.3,648.6 899.6,617.7" fill="#7a0606" opacity="0.25"/>
<polygon points="736.7,808.8 765.9,781.5 769.7,794.4" fill="#7a0606" opacity="0.45"/>
<polygon points="848.9,635 867.7,663.9 871.3,649.8" fill="#6e0505" opacity="0.25"/>
<polygon points="618.3,771.5 657.4,784.9 630.5,785.4" fill="#ff1c1c" opacity="0.35"/>
<polygon points="1049,668.5 1054.6,670.2 1053.2,645.4" fill="#ff1c1c" opacity="0.35"/>
<polygon points="823.3,611 787.3,589 819.7,593.3" fill="#ff1c1c" opacity="0.45"/>
<polygon points="1145.9,675.6 1166.6,663.1 1137.2,690.5" fill="#6e0505" opacity="0.35"/>
<polygon points="1093.3,626.2 1079.8,615.3 1075.4,652.5" fill="#7a0606" opacity="0.35"/>
<polygon points="974.4,787.4 980.7,751.8 1001.4,790.2" fill="#f01010" opacity="0.25"/>
<polygon points="819.8,533.2 809.6,531.4 839.3,537.6" fill="#6e0505" opacity="0.45"/>
<polygon points="1088,811.1 1076.8,801.3 1086.6,820.7" fill="#6e0505" opacity="0.45"/>
<polygon points="959.1,637 923.4,621.3 972.5,621.9" fill="#7a0606" opacity="0.25"/>
<polygon points="1021.7,589.8 979.2,591.6 991.5,596.6" fill="#ff1c1c" opacity="0.45"/>
<polygon points="713.6,548.9 726.5,561.9 760.3,572.9" fill="#6e0505" opacity="0.45"/>
<polygon points="1068.5,584.5 1026.9,552.9 1069.5,576.3" fill="#ff1c1c" opacity="0.45"/>
<polygon points="1057,532 1012.7,550.1 1068.4,545.1" fill="#7a0606" opacity="0.45"/>
<polygon points="775.2,705.9 810.5,715 779.5,709.9" fill="#f01010" opacity="0.35"/>
<polygon points="845,572.1 824.9,551.7 851.2,541.5" fill="#6e0505" opacity="0.25"/>
<polygon points="619.8,664.7 637,662 620.7,636.8" fill="#ff1c1c" opacity="0.45"/>
<polygon points="1103.1,616.5 1133,624.8 1103.4,610.2" fill="#7a0606" opacity="0.35"/>
<polygon points="959.5,696.5 944.5,700.8 978.9,671" fill="#ff1c1c" opacity="0.35"/>
<polygon points="1220.8,791.3 1204.7,780.8 1240.7,793" fill="#f01010" opacity="0.35"/>
<polygon points="1054.3,704.1 1078.6,737.5 1071.1,708.5" fill="#6e0505" opacity="0.35"/>
<polygon points="956.3,640.9 965.8,640.7 981.6,605.6" fill="#ff1c1c" opacity="0.35"/>
<polygon points="972.5,738.5 965.1,749 1001.6,737.9" fill="#ff1c1c" opacity="0.35"/>
<polygon points="785.5,600.7 824.2,620.1 808.5,608" fill="#6e0505" opacity="0.45"/>
<polygon points="1197.2,615.5 1189.7,584 1218.4,583" fill="#ff1c1c" opacity="0.45"/>
<polygon points="914.9,664.5 957.9,663.6 950.1,634.4" fill="#6e0505" opacity="0.45"/>
<polygon points="1033.4,605.4 1023.7,603.9 1031.6,591.7" fill="#7a0606" opacity="0.45"/>
<polygon points="735.5,672.5 741.7,687.4 745.7,698.8" fill="#6e0505" opacity="0.25"/>
<polygon points="952.5,619.3 955.6,616.6 978.9,615.9" fill="#f01010" opacity="0.35"/>
<polygon points="1124.8,613.6 1137.7,632.2 1175.3,616.5" fill="#7a0606" opacity="0.25"/>
<polygon points="851.3,677.9 816.3,696.8 854.4,677.2" fill="#ff1c1c" opacity="0.35"/>
<polygon points="1075.4,527.9 1059.6,523.3 1041.6,536.4" fill="#ff1c1c" opacity="0.45"/>
<polygon points="953.6,626.4 953.2,617.7 951.1,607.6" fill="#7a0606" opacity="0.35"/>
<polygon points="753.2,760.2 789.2,748.5 760.9,724.7" fill="#f01010" opacity="0.25"/>
<polygon points="1005.7,728.3 997.2,715.8 1022.2,733.2" fill="#7a0606" opacity="0.35"/>
<polygon points="1208.8,735.4 1217.5,737 1216.6,744.4" fill="#6e0505" opacity="0.45"/>
<polygon points="653.1,693.8 649.9,673.7 622.3,688.4" fill="#ff1c1c" opacity="0.45"/>
<polygon points="743,752.4 694,740 743.8,755.8" fill="#6e0505" opacity="0.35"/>
<polygon points="1215.7,590.2 1209.1,590.7 1256.3,556.8" fill="#7a0606" opacity="0.35"/>
<polygon points="907.6,676.3 931.8,647.5 954.6,665" fill="#ff1c1c" opacity="0.45"/>
<polygon points="705.7,715.8 739.8,692.2 743.7,679.8" fill="#f01010" opacity="0.45"/>
<polygon points="870.5,615.9 842.8,618.8 822.6,619.9" fill="#f01010" opacity="0.35"/>
<polygon points="1163.1,579.4 1159.3,594 1115.3,588.8" fill="#6e0505" opacity="0.25"/>
<polygon points="982.2,705.6 965.6,689.6 971.1,670.3" fill="#ff1c1c" opacity="0.25"/>
<polygon points="771.2,614.5 798.5,615.4 766.4,628" fill="#7a0606" opacity="0.35"/>
<polygon points="757.7,780.1 705.8,807.8 707.4,802.9" fill="#ff1c1c" opacity="0.35"/>
<polygon points="805.8,734.8 793.8,764.6 818.9,727.5" fill="#6e0505" opacity="0.45"/>
<polygon points="1165.6,808.6 1178.1,786.7 1202.9,787.1" fill="#6e0505" opacity="0.35"/>
<polygon points="687.8,721.3 738.4,705.6 706,707.6" fill="#ff1c1c" opacity="0.25"/>
<polygon points="1232,662.1 1204.2,661.2 1211.1,643.8" fill="#ff1c1c" opacity="0.35"/>
<polygon points="742.2,675 716.9,684.8 742.4,676.1" fill="#6e0505" opacity="0.45"/>
<polygon points="1191.3,648.8 1212.4,612.3 1184.6,617.5" fill="#7a0606" opacity="0.25"/>
<polygon points="834,729.1 822.2,752.8 844,736.1" fill="#ff1c1c" opacity="0.45"/>
<polygon points="1195,564.6 1200.3,586.1 1167.4,595.9" fill="#7a0606" opacity="0.35"/>
<polygon points="1053.9,676.7 1040.3,660.1 1021.7,683.3" fill="#f01010" opacity="0.45"/>
<polygon points="944.7,569.2 938.7,555.8 968.8,536.8" fill="#6e0505" opacity="0.45"/>
<polygon points="1109.3,714.8 1106,702 1108.8,710.8" fill="#6e0505" opacity="0.25"/>
<polygon points="1213.8,695.4 1201.4,696.3 1223.7,695.2" fill="#7a0606" opacity="0.25"/>
<polygon points="1116.1,610.8 1126,575.4 1114.7,598.6" fill="#ff1c1c" opacity="0.45"/>
<polygon points="714.2,679.9 666.9,721.3 686.6,701.9" fill="#7a0606" opacity="0.25"/>
<polygon points="724.6,532.7 710.9,558.5 750.2,529.3" fill="#f01010" opacity="0.35"/>
<polygon points="1223.5,818.6 1209.8,833.3 1258.1,831.2" fill="#6e0505" opacity="0.35"/>
<polygon points="900,684.8 902.6,681.3 860.5,677.8" fill="#ff1c1c" opacity="0.25"/>
<polygon points="1108.7,576.2 1105.3,580.2 1072.3,574.8" fill="#7a0606" opacity="0.35"/>
<polygon points="896.2,680.6 885,664 881,648.6" fill="#7a0606" opacity="0.25"/>
<path d="M530.5,863.2L572,868M530.5,863.2L538.5,842.9M572,868L538.5,842.9M538.5,842.9L587.1,845.9M538.5,842.9L546.5,807.6M538.5,842.9L596,807.5M546.5,807.6L596,807.5M546.5,807.6L554.5,783.1M596,807.5L554.5,783.1M554.5,783.1L608.8,783.9M554.5,783.1L562.5,739M554.5,783.1L611.7,749.6M562.5,739L611.7,749.6M562.5,739L570.5,710.7M611.7,749.6L570.5,710.7M570.5,710.7L617,711.8M572,868L625.2,872.9M572,868L587.1,845.9M572,868L627.6,852.5M587.1,845.9L627.6,852.5M587.1,845.9L596,807.5M627.6,852.5L596,807.5M596,807.5L624.2,816.3M596,807.5L608.8,783.9M596,807.5L619.7,790.7M608.8,783.9L619.7,790.7M608.8,783.9L611.7,749.6M619.7,790.7L611.7,749.6M611.7,749.6L644.8,745.6M611.7,749.6L617,711.8M611.7,749.6L663.2,725.4M617,711.8L663.2,725.4M625.2,872.9L641.5,877.7M625.2,872.9L627.6,852.5M641.5,877.7L627.6,852.5M627.6,852.5L674.3,849.6M627.6,852.5L624.2,816.3M627.6,852.5L662.2,806.2M624.2,816.3L662.2,806.2M624.2,816.3L619.7,790.7M662.2,806.2L619.7,790.7M619.7,790.7L673.5,784.1M619.7,790.7L644.8,745.6M619.7,790.7L675.4,753.2M644.8,745.6L675.4,753.2M644.8,745.6L663.2,725.4M675.4,753.2L663.2,725.4M663.2,725.4L695.8,720M641.5,877.7L715.1,882.5M641.5,877.7L674.3,849.6M641.5,877.7L710.6,845.3M674.3,849.6L710.6,845.3M674.3,849.6L662.2,806.2M710.6,845.3L662.2,806.2M662.2,806.2L714.2,811.5M662.2,806.2L673.5,784.1M662.2,806.2L726.2,778.8M673.5,784.1L726.2,778.8M673.5,784.1L675.4,753.2M726.2,778.8L675.4,753.2M675.4,753.2L740.1,751.5M675.4,753.2L695.8,720M675.4,753.2L740.5,716.5M695.8,720L740.5,716.5M715.1,882.5L729.1,887.3M715.1,882.5L710.6,845.3M729.1,887.3L710.6,845.3M710.6,845.3L736.6,851.3M710.6,845.3L714.2,811.5M710.6,845.3L764.9,826.1M714.2,811.5L764.9,826.1M714.2,811.5L726.2,778.8M764.9,826.1L726.2,778.8M726.2,778.8L759,784.7M726.2,778.8L740.1,751.5M726.2,778.8L755.5,754.5M740.1,751.5L755.5,754.5M740.1,751.5L740.5,716.5M755.5,754.5L740.5,716.5M740.5,716.5L776,720.4M729.1,887.3L782.3,892.2M729.1,887.3L736.6,851.3M729.1,887.3L802.6,847.6M736.6,851.3L802.6,847.6M736.6,851.3L764.9,826.1M802.6,847.6L764.9,826.1M764.9,826.1L787.8,835.4M764.9,826.1L759,784.7M764.9,826.1L788.6,791.5M759,784.7L788.6,791.5M759,784.7L755.5,754.5M788.6,791.5L755.5,754.5M755.5,754.5L819.5,764.7M755.5,754.5L776,720.4M755.5,754.5L809.6,724.6M776,720.4L809.6,724.6M782.3,892.2L828.7,897M782.3,892.2L802.6,847.6M828.7,897L802.6,847.6M802.6,847.6L831.1,866.9M802.6,847.6L787.8,835.4M802.6,847.6L823.4,819.7M787.8,835.4L823.4,819.7M787.8,835.4L788.6,791.5M823.4,819.7L788.6,791.5M788.6,791.5L831.2,808.8M788.6,791.5L819.5,764.7M788.6,791.5L859.3,766.4M819.5,764.7L859.3,766.4M819.5,764.7L809.6,724.6M859.3,766.4L809.6,724.6M809.6,724.6L848.1,740.2M828.7,897L851.8,901.8M828.7,897L831.1,866.9M828.7,897L868.7,861M831.1,866.9L868.7,861M831.1,866.9L823.4,819.7M868.7,861L823.4,819.7M823.4,819.7L880.6,838.7M823.4,819.7L831.2,808.8M823.4,819.7L887.7,791.7M831.2,808.8L887.7,791.7M831.2,808.8L859.3,766.4M887.7,791.7L859.3,766.4M859.3,766.4L869.1,769.5M859.3,766.4L848.1,740.2M859.3,766.4L872.5,727.9M848.1,740.2L872.5,727.9M851.8,901.8L915.2,906.7M851.8,901.8L868.7,861M915.2,906.7L868.7,861M868.7,861L927.5,862.7M868.7,861L880.6,838.7M868.7,861L917.9,827.4M880.6,838.7L917.9,827.4M880.6,838.7L887.7,791.7M917.9,827.4L887.7,791.7M887.7,791.7L914.3,804.2M887.7,791.7L869.1,769.5M887.7,791.7L912.3,772.7M869.1,769.5L912.3,772.7M869.1,769.5L872.5,727.9M912.3,772.7L872.5,727.9M872.5,727.9L913.3,730.6M915.2,906.7L964.2,911.5M915.2,906.7L927.5,862.7M915.2,906.7L949.5,868.7M927.5,862.7L949.5,868.7M927.5,862.7L917.9,827.4M949.5,868.7L917.9,827.4M917.9,827.4L974.1,847.5M917.9,827.4L914.3,804.2M917.9,827.4L969.8,799.2M914.3,804.2L969.8,799.2M914.3,804.2L912.3,772.7M969.8,799.2L912.3,772.7M912.3,772.7L981.2,777.7M912.3,772.7L913.3,730.6M912.3,772.7L962.3,744M913.3,730.6L962.3,744M964.2,911.5L999.8,916.3M964.2,911.5L949.5,868.7M999.8,916.3L949.5,868.7M949.5,868.7L980.6,870.2M949.5,868.7L974.1,847.5M949.5,868.7L1001.9,838.1M974.1,847.5L1001.9,838.1M974.1,847.5L969.8,799.2M1001.9,838.1L969.8,799.2M969.8,799.2L999.4,815.2M969.8,799.2L981.2,777.7M969.8,799.2L1003.9,767.3M981.2,777.7L1003.9,767.3M981.2,777.7L962.3,744M1003.9,767.3L962.3,744M962.3,744L1001.9,741.6M999.8,916.3L1051,921.2M999.8,916.3L980.6,870.2M999.8,916.3L1033.5,878.4M980.6,870.2L1033.5,878.4M980.6,870.2L1001.9,838.1M1033.5,878.4L1001.9,838.1M1001.9,838.1L1056.3,848.3M1001.9,838.1L999.4,815.2M1001.9,838.1L1036.4,805.4M999.4,815.2L1036.4,805.4M999.4,815.2L1003.9,767.3M1036.4,805.4L1003.9,767.3M1003.9,767.3L1059.4,789M1003.9,767.3L1001.9,741.6M1003.9,767.3L1056.2,736.6M1001.9,741.6L1056.2,736.6M1051,921.2L1076,926M1051,921.2L1033.5,878.4M1076,926L1033.5,878.4M1033.5,878.4L1071.9,882.9M1033.5,878.4L1056.3,848.3M1033.5,878.4L1088.9,856.9M1056.3,848.3L1088.9,856.9M1056.3,848.3L1036.4,805.4M1088.9,856.9L1036.4,805.4M1036.4,805.4L1098.5,826M1036.4,805.4L1059.4,789M1036.4,805.4L1079.5,784.9M1059.4,789L1079.5,784.9M1059.4,789L1056.2,736.6M1079.5,784.9L1056.2,736.6M1056.2,736.6L1097.5,741.9M1076,926L1120,930.8M1076,926L1071.9,882.9M1076,926L1115.5,886.7M1071.9,882.9L1115.5,886.7M1071.9,882.9L1088.9,856.9M1115.5,886.7L1088.9,856.9M1088.9,856.9L1122,866.6M1088.9,856.9L1098.5,826M1088.9,856.9L1127.7,820.8M1098.5,826L1127.7,820.8M1098.5,826L1079.5,784.9M1127.7,820.8L1079.5,784.9M1079.5,784.9L1111.9,788.7M1079.5,784.9L1097.5,741.9M1079.5,784.9L1110.9,736.7M1097.5,741.9L1110.9,736.7M1120,930.8L1167.1,935.6M1120,930.8L1115.5,886.7M1167.1,935.6L1115.5,886.7M1115.5,886.7L1159.5,895.4M1115.5,886.7L1122,866.6M1115.5,886.7L1171.4,861.5M1122,866.6L1171.4,861.5M1122,866.6L1127.7,820.8M1171.4,861.5L1127.7,820.8M1127.7,820.8L1175.9,831.4M1127.7,820.8L1111.9,788.7M1127.7,820.8L1178.4,776.7M1111.9,788.7L1178.4,776.7M1111.9,788.7L1110.9,736.7M1178.4,776.7L1110.9,736.7M1110.9,736.7L1159.5,757.9M1167.1,935.6L1215.5,940.5M1167.1,935.6L1159.5,895.4M1167.1,935.6L1206.8,906.6M1159.5,895.4L1206.8,906.6M1159.5,895.4L1171.4,861.5M1206.8,906.6L1171.4,861.5M1171.4,861.5L1189.3,861.8M1171.4,861.5L1175.9,831.4M1171.4,861.5L1201.2,829.2M1175.9,831.4L1201.2,829.2M1175.9,831.4L1178.4,776.7M1201.2,829.2L1178.4,776.7M1178.4,776.7L1209,788.1M1178.4,776.7L1159.5,757.9M1178.4,776.7L1190.8,745.5M1159.5,757.9L1190.8,745.5M1215.5,940.5L1246,945.3M1215.5,940.5L1206.8,906.6M1246,945.3L1206.8,906.6M1206.8,906.6L1246,909.9M1206.8,906.6L1189.3,861.8M1206.8,906.6L1246,881.3M1189.3,861.8L1246,881.3M1189.3,861.8L1201.2,829.2M1246,881.3L1201.2,829.2M1201.2,829.2L1246,826.9M1201.2,829.2L1209,788.1M1201.2,829.2L1246,795.8M1209,788.1L1246,795.8M1209,788.1L1190.8,745.5M1246,795.8L1190.8,745.5M1190.8,745.5L1246,767.1M1246,945.3L1246,909.9M1246,909.9L1246,881.3M1246,881.3L1246,826.9M1246,826.9L1246,795.8M1246,795.8L1246,767.1" stroke="#e00e10" stroke-width="2.2" fill="none" opacity=".9"/>
<path d="M803,769L929,727.5M531,863L587,842.5" stroke="#6e5a14" stroke-width="1.3" fill="none"/>
</g>
<polyline points="530.5,863.2 1245.9,945.3" fill="none" stroke="#d81010" stroke-width="1.5"/>
<polygon points="512,799 584,807 781.4,540.5 780.5,536.5 736.7,533.1" fill="#ffe610"/>
<path d="M557,756L569,747L581,749L566,762L557,756M566,762L590,775L602,772M581,749L592,772M566,762L587,780M583,776L589,783M733,579L760,585L742,596M728,583L752,600L760,585M739,570L762,588M744,574L764,580M655,660L700,652L712,640M660,668L690,655L706,628M690,655L715,655" stroke="#8a1208" stroke-width="1.2" fill="none"/>
<path d="M1268.2,840.3L1245.8,945" stroke="#0a0af0" stroke-width="6.5"/>
<path d="M1245.8,945L1242.3,961" stroke="#2c6ea6" stroke-width="6.5"/>
<path d="M744.6,467.1L742.2,477.4L748.7,477.6L743.4,491.2L749.9,491.2L744.6,504.8L751.1,504.6L748.7,514.8M795.8,470.3L793.5,480.6L799.3,480.8L794.5,494.5L800.2,494.5L795.4,508.2L801.1,508L798.9,518.2M847.6,473.5L845.6,483.9L850.6,484.1L846.2,497.9L851.2,497.8L846.8,511.6L851.7,511.4L849.7,521.6M900.1,476.8L898.2,487.3L902.4,487.4L898.5,501.3L902.7,501.2L898.9,515.1L903,514.8L901.2,525.2M953.3,480.1L951.6,490.7L955,490.7L951.6,504.8L954.9,504.6L951.6,518.7L954.9,518.3L953.3,528.7M1007.1,483.5L1005.6,494.1L1008.1,494.1L1005.3,508.3L1007.8,508L1005,522.2L1007.5,521.8L1006,532.3M1061.7,486.9L1060.3,497.6L1062,497.6L1059.7,511.8L1061.3,511.5L1059,525.9L1060.7,525.4L1059.4,535.9M1116.9,490.3L1115.7,501.1L1116.5,501L1114.7,515.4L1115.5,515.1L1113.8,529.5L1114.6,529L1113.4,539.6M1172.9,493.8L1171.9,504.7L1171.8,504.5L1170.5,519.1L1170.4,518.7L1169.2,533.2L1169.1,532.6L1168.2,543.4M1229.5,497.4L1228.8,508.3L1227.7,508.1L1227.1,522.8L1226.1,522.3L1225.4,537L1224.4,536.3L1223.6,547.1M728.3,484.9L725.8,495.5L732.8,495.5L727.1,509.7L734.1,509.4L728.5,523.7L735.4,523.2L733,533.8M781.2,488.3L778.8,499L785.1,498.9L779.9,513.3L786.1,513L780.9,527.3L787.1,526.8L784.8,537.4M834.8,491.7L832.6,502.6L838,502.4L833.3,516.9L838.7,516.5L834,531L839.3,530.4L837.2,541.1M889,495.3L887,506.2L891.6,506L887.4,520.6L891.9,520.1L887.8,534.8L892.3,534.1L890.4,544.9M944,498.8L942.2,509.8L945.9,509.6L942.3,524.3L945.9,523.8L942.3,538.5L946,537.8L944.2,548.7M999.7,502.4L998.1,513.5L1000.9,513.2L997.8,528L1000.6,527.5L997.6,542.4L1000.3,541.6L998.7,552.5M1056.2,506.1L1054.8,517.3L1056.6,516.9L1054.1,531.9L1056,531.2L1053.5,546.3L1055.3,545.4L1053.9,556.4M1113.4,509.8L1112.2,521L1113.1,520.6L1111.2,535.7L1112.1,535L1110.2,550.2L1111.1,549.3L1109.9,560.4M1171.4,513.5L1170.4,524.9L1170.3,524.4L1169,539.6L1168.9,538.9L1167.6,554.2L1167.6,553.2L1166.6,564.4M1230.2,517.3L1229.4,528.8L1228.3,528.2L1227.6,543.6L1226.5,542.8L1225.8,558.2L1224.8,557.1L1224,568.4M710.9,503.9L708.2,515L715.8,514.7L709.7,529.6L717.2,529L711.2,543.9L718.7,543.1L716.1,554.1M765.5,507.6L763,518.8L769.8,518.4L764.2,533.4L770.9,532.7L765.4,547.9L772,547L769.6,558M821,511.3L818.7,522.6L824.5,522.1L819.5,537.3L825.3,536.6L820.3,551.8L826.1,550.8L823.8,562M877.1,515.1L875,526.5L879.9,525.9L875.5,541.2L880.4,540.4L876,555.8L880.8,554.8L878.8,566M934.1,518.9L932.2,530.4L936.1,529.7L932.3,545.2L936.2,544.3L932.4,559.9L936.3,558.8L934.5,570.1M991.8,522.8L990.1,534.3L993.1,533.6L989.8,549.3L992.8,548.3L989.6,564L992.6,562.8L990.9,574.2M1050.3,526.7L1048.8,538.4L1050.8,537.6L1048.2,553.4L1050.2,552.3L1047.6,568.2L1049.6,566.9L1048.1,578.4M1109.6,530.7L1108.4,542.5L1109.3,541.6L1107.3,557.5L1108.3,556.4L1106.3,572.4L1107.3,571.1L1106.1,582.7M1169.8,534.7L1168.8,546.6L1168.7,545.7L1167.3,561.8L1167.3,560.6L1165.9,576.7L1165.9,575.3L1164.8,587M1230.8,538.8L1230,550.8L1228.8,549.8L1228.1,566L1227,564.8L1226.3,581.1L1225.2,579.5L1224.4,591.3M692.1,524.3L689.3,536L697.4,535.2L691,550.9L699.1,549.9L692.7,565.7L700.7,564.5L697.9,575.9M748.7,528.3L746.1,540L753.3,539.2L747.4,555.1L754.6,554L748.8,569.9L755.9,568.6L753.3,580.1M806.1,532.3L803.7,544.1L810,543.2L804.7,559.2L810.9,558.1L805.6,574.2L811.8,572.8L809.4,584.4M864.3,536.4L862.1,548.3L867.4,547.3L862.7,563.5L868,562.3L863.3,578.5L868.5,577L866.4,588.7M923.4,540.5L921.3,552.5L925.7,551.5L921.6,567.8L925.8,566.5L921.8,582.8L926,581.3L924,593.1M983.2,544.7L981.4,556.8L984.7,555.7L981.2,572.1L984.5,570.7L981.1,587.3L984.3,585.6L982.5,597.6M1044,548.9L1042.4,561.1L1044.6,559.9L1041.8,576.6L1044,575.1L1041.2,591.8L1043.4,590L1041.8,602.1M1105.6,553.2L1104.2,565.5L1105.3,564.2L1103.2,581.1L1104.3,579.5L1102.2,596.4L1103.3,594.5L1102,606.7M1168.1,557.6L1167,570L1166.9,568.6L1165.5,585.6L1165.5,583.9L1164.1,601L1164.1,599.1L1163,611.3M1231.5,562L1230.7,574.6L1229.4,573.1L1228.7,590.2L1227.6,588.5L1226.8,605.7L1225.7,603.7L1224.9,616M671.9,546.4L668.9,558.5L677.7,557.4L670.8,573.9L679.6,572.5L672.7,589.1L681.4,587.4L678.4,599.4M730.6,550.6L727.8,562.9L735.6,561.7L729.3,578.4L737.1,576.9L730.8,593.6L738.5,591.9L735.8,603.9M790.1,555L787.5,567.3L794.4,566L788.6,582.9L795.4,581.3L789.8,598.2L796.5,596.4L794,608.6M850.5,559.4L848.1,571.8L853.9,570.4L848.9,587.5L854.6,585.8L849.6,602.9L855.2,600.9L852.9,613.2M911.8,563.8L909.7,576.4L914.3,574.9L910,592.1L914.6,590.3L910.3,607.6L914.9,605.5L912.8,618M974,568.3L972.1,581L975.7,579.4L972,596.8L975.5,594.9L971.8,612.4L975.3,610.2L973.5,622.8M1037.1,572.9L1035.5,585.7L1037.9,584L1034.9,601.6L1037.3,599.6L1034.3,617.3L1036.7,615L1035.1,627.6M1101.2,577.6L1099.8,590.5L1101,588.7L1098.7,606.5L1100,604.4L1097.7,622.2L1098.9,619.8L1097.6,632.6M1166.2,582.3L1165.1,595.4L1165.1,593.4L1163.6,611.4L1163.6,609.2L1162.1,627.2L1162.1,624.7L1161,637.6M1232.3,587.1L1231.4,600.3L1230.1,598.3L1229.4,616.4L1228.1,614.1L1227.4,632.3L1226.2,629.7L1225.3,642.7M650.1,570.2L646.8,582.9L656.5,581.3L649,598.8L658.5,596.8L651.1,614.4L660.5,612.2L657.4,624.7M711,574.8L708,587.7L716.5,585.9L709.7,603.6L718.2,601.5L711.4,619.3L719.8,617L716.9,629.6M772.8,579.5L770,592.5L777.5,590.6L771.3,608.5L778.7,606.3L772.6,624.3L779.9,621.8L777.2,634.6M835.6,584.3L833,597.4L839.3,595.4L833.9,613.4L840.1,611.2L834.7,629.3L840.9,626.8L838.5,639.7M899.3,589.1L897,602.3L902.1,600.2L897.4,618.5L902.5,616.1L897.8,634.4L902.8,631.8L900.6,644.8M964,594L962,607.3L965.9,605.1L961.9,623.6L965.8,621.1L961.8,639.6L965.7,636.9L963.7,650M1029.7,599L1027.9,612.4L1030.6,610.1L1027.4,628.8L1030,626.2L1026.8,644.9L1029.5,642L1027.7,655.3M1096.4,604L1094.9,617.6L1096.3,615.2L1093.9,634.1L1095.3,631.3L1092.8,650.3L1094.2,647.2L1092.8,660.6M1164.2,609.2L1163,622.9L1163,620.4L1161.4,639.4L1161.5,636.6L1159.9,655.7L1160,652.6L1158.8,666.1M1233.1,614.4L1232.2,628.3L1230.8,625.6L1230.1,644.9L1228.8,641.9L1228,661.3L1226.7,658L1225.8,671.6M626.5,596L623,609.4L633.4,607.2L625.4,625.7L635.7,623.2L627.8,641.8L638,638.9L634.6,652.1M689.8,601L686.5,614.5L695.8,612.2L688.5,630.9L697.7,628.3L690.4,647.1L699.5,644.1L696.4,657.4M754,606.1L751,619.8L759.2,617.3L752.5,636.3L760.6,633.5L754,652.5L762,649.4L759.1,662.8M819.3,611.3L816.6,625.1L823.5,622.5L817.6,641.6L824.5,638.7L818.6,658L825.4,654.8L822.8,668.3M885.7,616.5L883.2,630.5L888.9,627.7L883.8,647.1L889.3,644.1L884.3,663.5L889.8,660.2L887.4,673.9M953.1,621.9L950.9,635.9L955.2,633.1L950.9,652.7L955.2,649.5L951,669.2L955.2,665.7L953.1,679.5M1021.6,627.3L1019.7,641.5L1022.7,638.5L1019.2,658.4L1022.1,655L1018.7,674.9L1021.6,671.3L1019.8,685.3M1091.3,632.8L1089.7,647.2L1091.2,644L1088.6,664.1L1090.1,660.6L1087.6,680.8L1089.1,677L1087.6,691.1M1162,638.4L1160.8,652.9L1160.8,649.6L1159.1,670L1159.2,666.3L1157.5,686.7L1157.7,682.8L1156.4,697M1234,644.1L1233.1,658.8L1231.6,655.3L1230.8,675.9L1229.5,672.1L1228.7,692.8L1227.3,688.7L1226.4,703.1M600.7,624.1L597,638.2L608.4,635.3L599.7,655L611,651.8L602.4,671.5L613.6,668L609.9,681.9M666.6,629.5L663.1,643.8L673.3,640.7L665.3,660.7L675.4,657.3L667.5,677.3L677.5,673.6L674.2,687.7M733.6,635.1L730.3,649.5L739.3,646.3L732.1,666.5L740.9,663L733.8,683.2L742.5,679.4L739.4,693.5M801.6,640.7L798.7,655.3L806.3,651.9L799.9,672.4L807.4,668.7L801.1,689.2L808.5,685.2L805.7,699.5M870.9,646.5L868.2,661.2L874.4,657.7L868.9,678.4L875,674.5L869.5,695.3L875.6,691.1L873.1,705.6M941.2,652.3L938.9,667.2L943.6,663.5L939,684.4L943.7,680.5L939.1,701.4L943.8,697.1L941.5,711.7M1012.8,658.3L1010.8,673.3L1014,669.5L1010.3,690.6L1013.6,686.5L1009.9,707.7L1013.1,703.2L1011.1,718M1085.6,664.3L1083.9,679.5L1085.6,675.5L1082.8,696.9L1084.6,692.6L1081.8,714.1L1083.5,709.5L1081.9,724.3M1159.6,670.4L1158.3,685.8L1158.4,681.6L1156.6,703.3L1156.8,698.8L1155,720.6L1155.2,715.8L1153.8,730.8M1235,676.7L1234,692.2L1232.5,687.9L1231.7,709.8L1230.2,705.2L1229.4,727.2L1228,722.2L1227,737.4M572.7,654.7L568.6,669.7L581.2,665.9L571.6,687L584.1,682.9L574.7,704L586.9,699.6L583,714.3M641.3,660.7L637.5,675.8L648.8,671.9L640.1,693.2L651.2,689L642.6,710.3L653.5,705.8L649.9,720.6M711.2,666.8L707.7,682L717.5,678L709.7,699.5L719.4,695.1L711.7,716.8L721.2,712L717.9,727M782.3,673L779.1,688.4L787.5,684.2L780.5,706L788.8,701.4L781.9,723.3L790.1,718.4L787.1,733.5M854.6,679.3L851.8,694.8L858.6,690.4L852.6,712.5L859.4,707.8L853.4,730L860.1,724.9L857.4,740.1M928.2,685.7L925.7,701.4L931,696.8L925.9,719.2L931.1,714.3L926.1,736.7L931.3,731.5L928.9,746.9M1003.1,692.2L1001,708.1L1004.6,703.3L1000.5,726L1004.2,720.9L1000.1,743.6L1003.7,738.2L1001.7,753.7M1079.4,698.8L1077.6,714.9L1079.5,710L1076.5,732.9L1078.5,727.6L1075.5,750.6L1077.4,745L1075.7,760.7M1157,705.6L1155.6,721.9L1155.8,716.7L1153.8,740L1154.1,734.4L1152.1,757.8L1152.4,751.9L1151,767.8M1236.1,712.5L1235,728.9L1233.4,723.6L1232.6,747.1L1231,741.4L1230.2,765L1228.7,758.9L1227.7,775.1M541.9,688.3L537.4,704.1L551.3,699.5L540.9,722L554.6,717L544.3,739.5L557.8,734.2L553.6,749.7M613.6,694.9L609.5,710.9L621.9,706L612.4,728.8L624.6,723.6L615.3,746.5L627.3,740.9L623.4,756.6M686.7,701.6L682.9,717.7L693.7,712.7L685.2,735.8L695.9,730.4L687.4,753.5L698,747.8L694.4,763.6M761,708.4L757.6,724.7L766.8,719.5L759.3,742.9L768.4,737.3L760.9,760.7L769.9,754.8L766.6,770.8M836.7,715.3L833.7,731.9L841.2,726.4L834.7,750.1L842.2,744.3L835.7,768.1L843.1,761.9L840.2,778.1M913.9,722.4L911.2,739.1L917,733.4L911.5,757.5L917.3,751.4L911.9,775.5L917.6,769.1L915,785.5M992.5,729.6L990.1,746.5L994.2,740.6L989.8,765L993.8,758.7L989.5,783.1L993.5,776.5L991.2,793M1072.5,736.9L1070.6,754L1072.8,747.9L1069.5,772.6L1071.8,766.1L1068.5,790.9L1070.7,784L1068.9,800.7M1154.1,744.4L1152.6,761.7L1152.9,755.3L1150.8,780.4L1151.1,773.6L1149,798.7L1149.4,791.6L1147.9,808.5M1237.3,752L1236.2,769.5L1234.5,762.9L1233.6,788.3L1232,781.3L1231.1,806.8L1229.5,799.4L1228.4,816.5" stroke="#00ff00" stroke-width="4" fill="none" stroke-linejoin="miter" stroke-miterlimit="2" shape-rendering="crispEdges"/>
<path d="M741,514.3L756.5,515.3L749.7,525.3ZM791.1,517.7L806.8,518.7L799.6,528.8ZM841.8,521.1L857.7,522.1L850.2,532.3ZM893.1,524.7L909.3,525.7L901.4,535.9ZM945.1,528.2L961.4,529.2L953.3,539.5ZM997.7,531.8L1014.3,532.8L1005.7,543.1ZM1051,535.4L1067.8,536.4L1058.9,546.8ZM1104.9,539.1L1121.9,540.1L1112.7,550.5ZM1159.6,542.9L1176.8,543.9L1167.2,554.3ZM1214.9,546.6L1232.3,547.6L1222.3,558.2ZM724.9,533.3L741,534.3L734,544.6ZM776.6,536.9L792.9,537.9L785.6,548.3ZM829,540.6L845.5,541.6L837.8,552.1ZM882,544.4L898.7,545.4L890.7,555.9ZM935.7,548.2L952.7,549.2L944.2,559.7ZM990.2,552L1007.3,553L998.5,563.6ZM1045.3,555.9L1062.6,556.9L1053.4,567.6ZM1101.1,559.9L1118.7,560.9L1109.1,571.6ZM1157.7,563.9L1175.5,564.9L1165.5,575.6ZM1215,567.9L1233,568.9L1222.7,579.8ZM707.8,553.6L724.4,554.6L717.2,565.2ZM761.2,557.5L778,558.5L770.5,569.2ZM815.3,561.5L832.4,562.5L824.5,573.2ZM870.2,565.5L887.4,566.5L879.2,577.3ZM925.7,569.6L943.2,570.6L934.6,581.4ZM982,573.7L999.8,574.7L990.7,585.6ZM1039.1,577.9L1057.1,578.9L1047.6,589.9ZM1097,582.2L1115.2,583.2L1105.3,594.2ZM1155.6,586.5L1174.1,587.5L1163.8,598.5ZM1215.1,590.8L1233.8,591.8L1223,603ZM689.4,575.4L706.5,576.4L699.2,587.3ZM744.6,579.6L762,580.6L754.3,591.6ZM800.6,583.9L818.3,584.9L810.2,595.9ZM857.4,588.2L875.3,589.2L866.8,600.3ZM915,592.6L933.1,593.6L924.2,604.8ZM973.3,597.1L991.7,598.1L982.4,609.3ZM1032.5,601.6L1051.2,602.6L1041.4,613.8ZM1092.5,606.2L1111.4,607.2L1101.2,618.5ZM1153.4,610.8L1172.6,611.8L1161.9,623.2ZM1215.1,615.5L1234.6,616.5L1223.4,627.9ZM669.5,598.9L687.3,599.9L679.9,611.1ZM726.8,603.4L744.8,604.4L736.9,615.7ZM784.8,608.1L803.1,609.1L794.8,620.4ZM843.7,612.7L862.2,613.7L853.5,625.1ZM903.4,617.5L922.2,618.5L913,629.9ZM963.9,622.3L983,623.3L973.4,634.8ZM1025.4,627.1L1044.8,628.1L1034.6,639.7ZM1087.7,632.1L1107.4,633.1L1096.8,644.7ZM1151,637.1L1170.9,638.1L1159.8,649.8ZM1215.2,642.2L1235.5,643.2L1223.8,654.9ZM648.2,624.2L666.6,625.2L659,636.8ZM707.5,629.1L726.2,630.1L718.2,641.7ZM767.7,634.1L786.7,635.1L778.2,646.8ZM828.8,639.2L848.1,640.2L839.1,651.9ZM890.8,644.3L910.4,645.3L900.9,657.1ZM953.8,649.5L973.6,650.5L963.6,662.3ZM1017.7,654.8L1037.8,655.8L1027.3,667.7ZM1082.5,660.1L1103,661.1L1092,673.1ZM1148.4,665.6L1169.2,666.6L1157.6,678.6ZM1215.3,671.1L1236.4,672.1L1224.3,684.2ZM625.1,651.6L644.2,652.6L636.4,664.5ZM686.7,656.9L706.1,657.9L697.9,669.9ZM749.2,662.3L769,663.3L760.2,675.3ZM812.7,667.8L832.8,668.8L823.5,680.9ZM877.2,673.4L897.6,674.4L887.8,686.5ZM942.8,679L963.4,680L953.1,692.2ZM1009.3,684.8L1030.3,685.8L1019.4,698ZM1076.9,690.6L1098.2,691.6L1086.8,703.9ZM1145.6,696.5L1167.3,697.5L1155.2,709.9ZM1215.4,702.6L1237.4,703.6L1224.7,716ZM600,681.4L619.9,682.4L612,694.6ZM664.1,687.2L684.3,688.2L675.8,700.4ZM729.1,693L749.7,694L740.7,706.4ZM795.3,699L816.1,700L806.6,712.4ZM862.5,705.1L883.7,706.1L873.5,718.5ZM930.8,711.2L952.3,712.2L941.6,724.8ZM1000.2,717.5L1022.1,718.5L1010.8,731.1ZM1070.8,723.8L1093,724.8L1081.1,737.5ZM1142.5,730.3L1165.2,731.3L1152.6,744.1ZM1215.5,736.9L1238.5,737.9L1225.3,750.7ZM572.7,713.8L593.4,714.8L585.3,727.3ZM639.4,720.1L660.4,721.1L651.8,733.7ZM707.2,726.5L728.6,727.5L719.4,740.2ZM776.2,733L797.9,734L788.1,746.8ZM846.3,739.6L868.4,740.6L858,753.5ZM917.6,746.4L940.2,747.4L929,760.3ZM990.2,753.2L1013.1,754.2L1001.3,767.2ZM1064,760.2L1087.3,761.2L1074.9,774.3ZM1139.2,767.3L1162.9,768.3L1149.7,781.5ZM1215.6,774.6L1239.8,775.6L1225.8,788.8ZM542.8,749.2L564.4,750.2L556.2,763.1ZM612.4,756.1L634.4,757.1L625.5,770.1ZM683.2,763.1L705.6,764.1L696.1,777.2ZM755.3,770.3L778,771.3L767.9,784.5ZM828.6,777.6L851.8,778.6L840.9,791.8ZM903.2,785L926.8,786L915.3,799.3ZM979.2,792.5L1003.3,793.5L991,806.9ZM1056.6,800.2L1081.1,801.2L1068.1,814.7ZM1135.4,808L1160.4,809L1146.5,822.6ZM1215.7,816L1241.1,817L1226.5,830.6Z" fill="#00ff00" shape-rendering="crispEdges"/>
<text transform="matrix(1 0.117 -0.27 1 1264.7 873.3)" x="0" y="0" font-family="DejaVu Sans,sans-serif" font-size="37" fill="#fff" textLength="70.5" lengthAdjust="spacingAndGlyphs">Air</text>
<text transform="matrix(1 0.121 -0.28 1 1258.2 916.8)" x="0" y="0" font-family="DejaVu Sans,sans-serif" font-size="34" fill="#fff" textLength="323" lengthAdjust="spacingAndGlyphs">Silver (active)</text>
<text transform="matrix(1 0.125 -0.27 1 1246.4 994.3)" x="0" y="0" font-family="DejaVu Sans,sans-serif" font-size="30.2" fill="#fff" textLength="465" lengthAdjust="spacingAndGlyphs">PEDOT:PSS (active)</text>
</svg>
<div class="t" style="left:11px;top:1211px;color:#111">/home/rod/Desktop/asdsasad</div>
<svg class="abs" style="left:1786px;top:1217px" width="11" height="11"><g fill="#bbb"><rect x="8" y="2" width="1" height="1"/><rect x="5" y="5" width="1" height="1"/><rect x="8" y="5" width="1" height="1"/><rect x="2" y="8" width="1" height="1"/><rect x="5" y="8" width="1" height="1"/><rect x="8" y="8" width="1" height="1"/></g></svg>
<div class="abs" style="left:1591px;top:-10px;width:230px;height:96.500px;background:#efefef;box-shadow:0 2px 9px 1px rgba(0,0,0,.21)"></div>
<div class="t" style="left:1678.500px;top:-18.700px;font-size:24.800px;line-height:30px;color:#111">Simulation</div>
<div class="t" style="left:1608px;top:57.500px;font-size:12.500px;color:#111">8/8</div>
</body></html>
